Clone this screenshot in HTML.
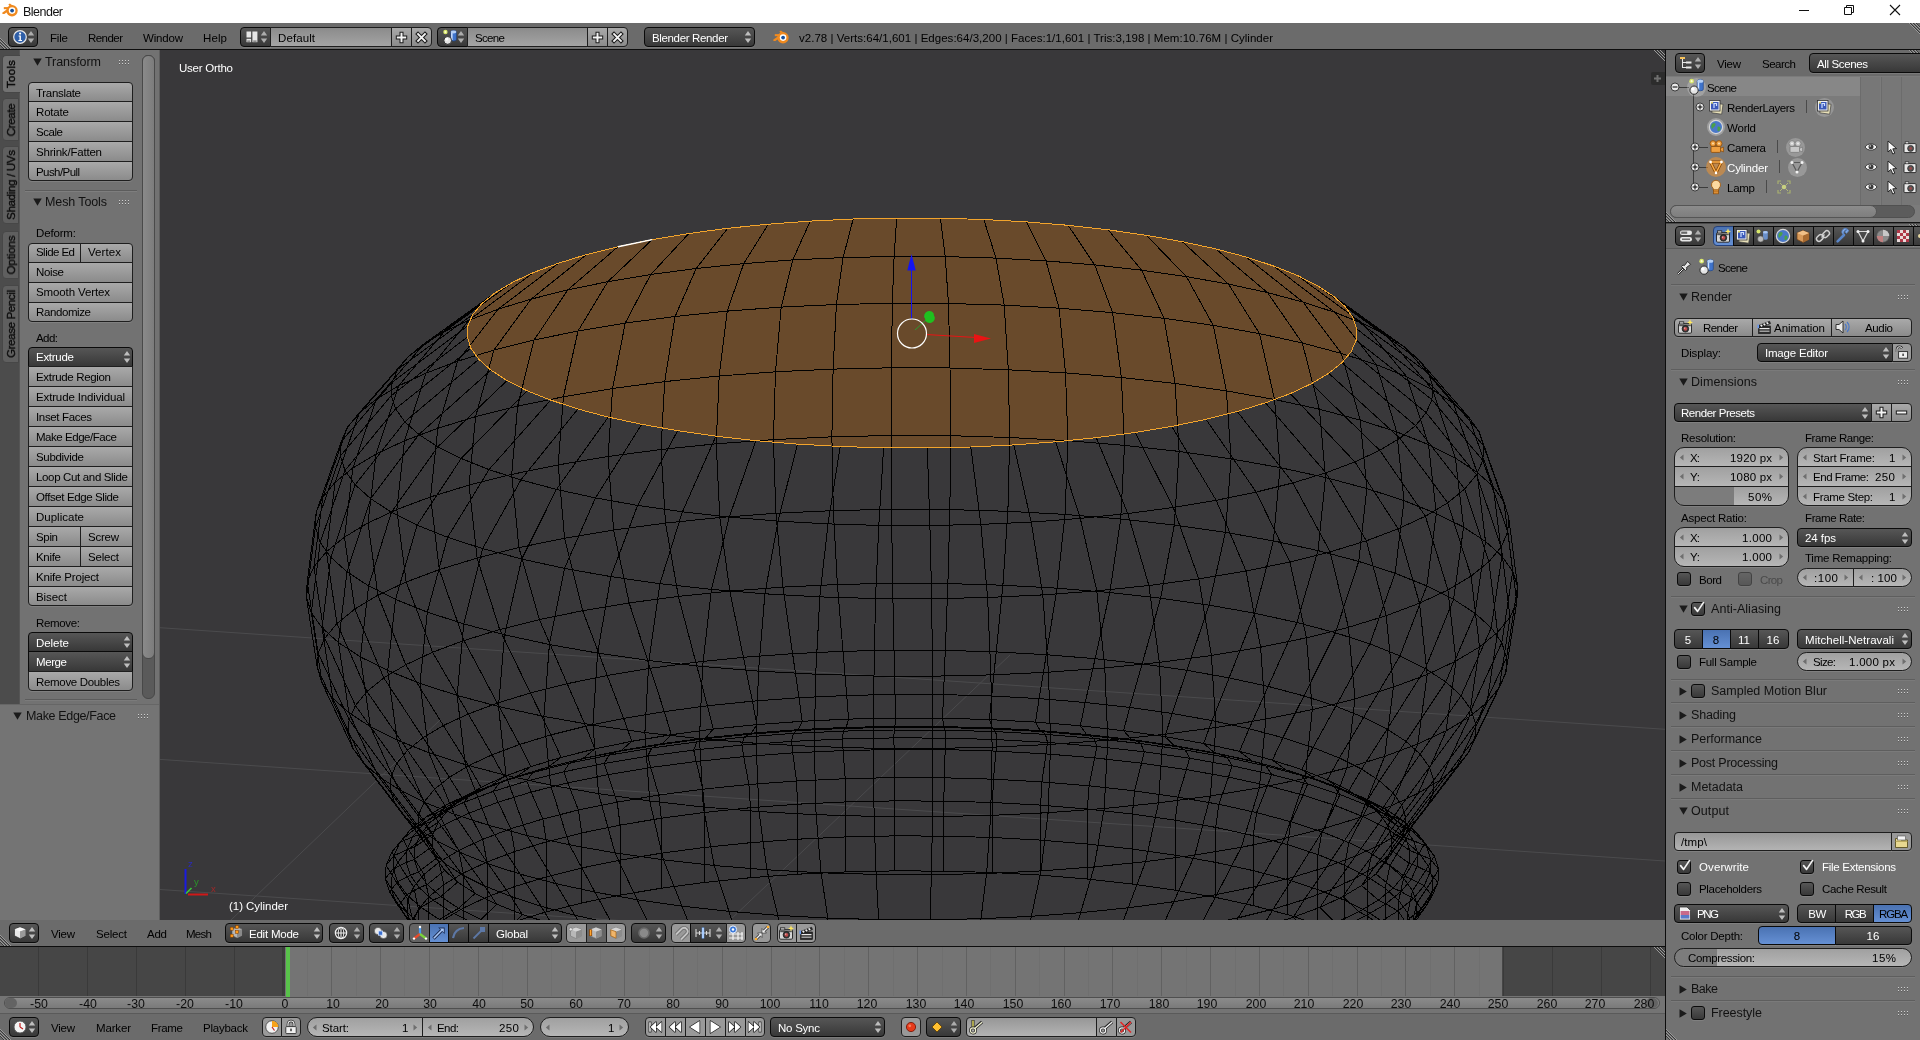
<!DOCTYPE html><html><head><meta charset="utf-8"><title>Blender</title><style>
html,body{margin:0;padding:0;background:#727272;}
body{width:1920px;height:1040px;position:relative;overflow:hidden;font-family:"Liberation Sans", sans-serif;font-size:11.5px;}
div,span,svg{position:absolute;box-sizing:border-box;}
.t{white-space:pre;line-height:16px;height:16px;will-change:transform;}

.w{border:1px solid #1e1e1e;box-shadow:0 1px 0 rgba(255,255,255,0.10);}
.tool{background:linear-gradient(#a9a9a9,#8b8b8b);}
.reg{background:#999;}
.menu{background:linear-gradient(#565656,#383838);border-color:#0a0a0a;}
.num{background:linear-gradient(#a0a0a0,#b6b6b6);}
.txt{background:linear-gradient(#979797,#b3b3b3);}
.radio{background:linear-gradient(#565656,#383838);border-color:#0a0a0a;}
.rsel{background:linear-gradient(#4a72b2,#6590d4);border-color:#0a0a0a;}
.opt{background:linear-gradient(#565656,#383838);border-color:#0a0a0a;border-radius:3px;}
.tsel{background:#646464;}
</style></head><body><div style="left:0px;top:0px;width:1920px;height:23px;background:#fff"></div>
<div style="left:0px;top:23px;width:1920px;height:26px;background:#6b6b6b"></div>
<div style="left:0px;top:49px;width:1920px;height:1px;background:#0d0d0d"></div>
<div style="left:160px;top:50px;width:1505px;height:870px;background:#39383a"></div>
<svg style="left:160px;top:50px" width="1505" height="870" viewBox="160 50 1505 870">
<g stroke="#4b4b4d" stroke-width="1" fill="none">
<path d="M160,627.7L1665,729.3 M160,759.4L1665,861.0 M160,889.5L1665,991.1 M231,920L440,720 M730,920L1010,655"/>
</g>
<path d="M896.7,218.1L940.4,218.2L983.8,219.5L1026.5,221.9L1068.1,225.3L1108.1,229.8L1146.4,235.3L1182.3,241.7L1215.7,248.9L1246.1,257.0L1273.3,265.9L1297.0,275.3L1317.0,285.4L1333.1,295.9L1345.2,306.7L1353.1,317.8L1356.7,329.0L1356.1,340.3L1351.2,351.5L1342.0,362.6L1328.7,373.3L1311.4,383.7L1290.3,393.6L1265.5,402.8L1237.3,411.5L1206.0,419.3L1171.8,426.4L1135.1,432.5L1096.3,437.7L1055.7,441.8L1013.8,444.9L970.8,447.0L927.3,447.9L883.6,447.8L840.2,446.5L797.5,444.1L755.9,440.7L715.9,436.2L677.6,430.7L641.7,424.3L608.3,417.1L577.9,409.0L550.7,400.1L527.0,390.7L507.0,380.6L490.9,370.1L478.8,359.3L470.9,348.2L467.3,337.0L467.9,325.7L472.8,314.5L482.0,303.4L495.3,292.7L512.6,282.3L533.7,272.4L558.5,263.2L586.7,254.5L618.0,246.7L652.2,239.6L688.9,233.5L727.7,228.3L768.3,224.2L810.2,221.1L853.2,219.0Z" fill="#694a2b" stroke="none"/>
<path d="M894.1,256.5L945.2,256.6L996.0,258.1L1046.0,260.9L1094.7,264.9L1141.6,270.2L1186.4,276.6L1228.5,284.1L1267.5,292.6L1303.1,302.1L1335.0,312.4L1362.8,323.5L1386.2,335.2L1405.1,347.5L1419.2,360.2L1428.4,373.2L1432.7,386.4L1431.9,399.6L1426.2,412.7L1415.5,425.6L1399.9,438.2L1379.7,450.3L1354.9,461.9L1325.9,472.8L1292.9,482.9L1256.2,492.1L1216.2,500.3L1173.3,507.5L1127.8,513.5L1080.3,518.4L1031.2,522.1L980.9,524.4L929.9,525.5L878.8,525.4L828.0,523.9L778.0,521.1L729.3,517.1L682.4,511.8L637.6,505.4L595.5,497.9L556.5,489.4L520.9,479.9L489.0,469.6L461.2,458.5L437.8,446.8L418.9,434.5L404.8,421.8L395.6,408.8L391.3,395.6L392.1,382.4L397.8,369.3L408.5,356.4L424.1,343.8L444.3,331.7L469.1,320.1L498.1,309.2L531.1,299.1L567.8,289.9L607.8,281.7L650.7,274.5L696.2,268.5L743.7,263.6L792.8,259.9L843.1,257.6ZM892.3,303.3L948.5,303.5L1004.2,305.1L1059.1,308.2L1112.6,312.6L1164.1,318.3L1213.2,325.4L1259.5,333.6L1302.3,343.0L1341.4,353.4L1376.4,364.7L1406.9,376.9L1432.6,389.8L1453.3,403.3L1468.8,417.2L1479.0,431.5L1483.7,445.9L1482.8,460.4L1476.5,474.8L1464.8,489.0L1447.7,502.8L1425.4,516.2L1398.2,528.8L1366.4,540.8L1330.1,551.9L1289.9,562.0L1246.0,571.0L1198.8,578.9L1148.9,585.5L1096.8,590.9L1042.8,594.9L987.6,597.5L931.7,598.7L875.5,598.5L819.8,596.9L764.9,593.8L711.4,589.4L659.9,583.7L610.8,576.6L564.5,568.4L521.7,559.0L482.6,548.6L447.6,537.3L417.1,525.1L391.4,512.2L370.7,498.7L355.2,484.8L345.0,470.5L340.3,456.1L341.2,441.6L347.5,427.2L359.2,413.0L376.3,399.2L398.6,385.8L425.8,373.2L457.6,361.2L493.9,350.1L534.1,340.0L578.0,331.0L625.2,323.1L675.1,316.5L727.2,311.1L781.2,307.1L836.4,304.5ZM891.5,367.8L950.0,368.0L1008.3,369.8L1065.5,372.9L1121.4,377.5L1175.1,383.5L1226.4,390.9L1274.6,399.5L1319.4,409.2L1360.2,420.1L1396.7,431.9L1428.5,444.6L1455.4,458.1L1477.0,472.2L1493.2,486.7L1503.8,501.6L1508.6,516.7L1507.8,531.8L1501.2,546.9L1488.9,561.7L1471.1,576.1L1447.9,590.0L1419.5,603.2L1386.2,615.7L1348.4,627.3L1306.4,637.8L1260.6,647.2L1211.4,655.5L1159.3,662.4L1104.8,668.0L1048.5,672.2L990.9,674.9L932.5,676.2L874.0,676.0L815.7,674.2L758.5,671.1L702.6,666.5L648.9,660.5L597.6,653.1L549.4,644.5L504.6,634.8L463.8,623.9L427.3,612.1L395.5,599.4L368.6,585.9L347.0,571.8L330.8,557.3L320.2,542.4L315.4,527.3L316.2,512.2L322.8,497.1L335.1,482.3L352.9,467.9L376.1,454.0L404.5,440.8L437.8,428.3L475.6,416.7L517.6,406.2L563.4,396.8L612.6,388.5L664.7,381.6L719.2,376.0L775.5,371.8L833.1,369.1ZM891.2,435.5L950.6,435.7L1009.7,437.5L1067.9,440.7L1124.5,445.4L1179.1,451.4L1231.1,458.9L1280.1,467.6L1325.5,477.5L1366.9,488.6L1404.0,500.6L1436.3,513.5L1463.6,527.1L1485.5,541.4L1501.9,556.2L1512.7,571.3L1517.6,586.6L1516.8,602.0L1510.1,617.2L1497.6,632.3L1479.5,646.9L1456.0,661.0L1427.2,674.5L1393.4,687.1L1355.0,698.9L1312.3,709.6L1265.8,719.1L1215.9,727.5L1163.0,734.5L1107.8,740.2L1050.6,744.4L992.1,747.2L932.8,748.5L873.4,748.3L814.3,746.5L756.1,743.3L699.5,738.6L644.9,732.6L592.9,725.1L543.9,716.4L498.5,706.5L457.1,695.4L420.0,683.4L387.7,670.5L360.4,656.9L338.5,642.6L322.1,627.8L311.3,612.7L306.4,597.4L307.2,582.0L313.9,566.8L326.4,551.7L344.5,537.1L368.0,523.0L396.8,509.5L430.6,496.9L469.0,485.1L511.7,474.4L558.2,464.9L608.1,456.5L661.0,449.5L716.2,443.8L773.4,439.6L831.9,436.8ZM891.5,509.3L949.9,509.6L1007.9,511.3L1065.0,514.4L1120.7,519.0L1174.3,525.0L1225.4,532.3L1273.4,540.9L1318.0,550.6L1358.7,561.4L1395.1,573.2L1426.8,585.9L1453.6,599.3L1475.1,613.3L1491.2,627.8L1501.8,642.7L1506.6,657.7L1505.8,672.8L1499.2,687.8L1487.0,702.5L1469.2,716.9L1446.1,730.8L1417.8,744.0L1384.7,756.4L1346.9,767.9L1305.1,778.4L1259.4,787.8L1210.4,796.0L1158.5,802.9L1104.2,808.5L1048.1,812.7L990.7,815.4L932.5,816.7L874.1,816.4L816.1,814.7L759.0,811.6L703.3,807.0L649.7,801.0L598.6,793.7L550.6,785.1L506.0,775.4L465.3,764.6L428.9,752.8L397.2,740.1L370.4,726.7L348.9,712.7L332.8,698.2L322.2,683.3L317.4,668.3L318.2,653.2L324.8,638.2L337.0,623.5L354.8,609.1L377.9,595.2L406.2,582.0L439.3,569.6L477.1,558.1L518.9,547.6L564.6,538.2L613.6,530.0L665.5,523.1L719.8,517.5L775.9,513.3L833.3,510.6ZM892.6,583.3L947.9,583.6L1002.9,585.2L1057.1,588.2L1109.8,592.5L1160.6,598.2L1209.0,605.1L1254.6,613.2L1296.9,622.5L1335.4,632.7L1369.9,643.9L1400.0,655.9L1425.3,668.6L1445.8,681.9L1461.1,695.7L1471.1,709.7L1475.7,724.0L1474.9,738.3L1468.6,752.5L1457.0,766.5L1440.2,780.1L1418.3,793.2L1391.4,805.8L1360.0,817.5L1324.3,828.4L1284.6,838.4L1241.3,847.3L1194.8,855.1L1145.6,861.6L1094.2,866.9L1041.0,870.9L986.6,873.5L931.4,874.7L876.1,874.4L821.1,872.8L766.9,869.8L714.2,865.5L663.4,859.8L615.0,852.9L569.4,844.8L527.1,835.5L488.6,825.3L454.1,814.1L424.0,802.1L398.7,789.4L378.2,776.1L362.9,762.3L352.9,748.3L348.3,734.0L349.1,719.7L355.4,705.5L367.0,691.5L383.8,677.9L405.7,664.8L432.6,652.2L464.0,640.5L499.7,629.6L539.4,619.6L582.7,610.7L629.2,602.9L678.4,596.4L729.8,591.1L783.0,587.1L837.4,584.5ZM894.0,650.2L945.3,650.4L996.2,651.9L1046.3,654.7L1095.1,658.7L1142.1,663.9L1186.9,670.3L1229.1,677.9L1268.2,686.4L1303.9,695.9L1335.8,706.2L1363.6,717.4L1387.1,729.1L1406.0,741.4L1420.2,754.2L1429.4,767.2L1433.7,780.4L1432.9,793.6L1427.2,806.7L1416.4,819.7L1400.9,832.3L1380.6,844.5L1355.7,856.0L1326.7,866.9L1293.6,877.0L1256.8,886.3L1216.8,894.5L1173.8,901.7L1128.2,907.8L1080.6,912.7L1031.4,916.3L981.0,918.7L930.0,919.8L878.7,919.6L827.8,918.1L777.7,915.3L728.9,911.3L681.9,906.1L637.1,899.7L594.9,892.1L555.8,883.6L520.1,874.1L488.2,863.8L460.4,852.6L436.9,840.9L418.0,828.6L403.8,815.8L394.6,802.8L390.3,789.6L391.1,776.4L396.8,763.3L407.6,750.3L423.1,737.7L443.4,725.5L468.3,714.0L497.3,703.1L530.4,693.0L567.2,683.7L607.2,675.5L650.2,668.3L695.8,662.2L743.4,657.3L792.6,653.7L843.0,651.3ZM895.0,694.4L943.5,694.6L991.7,696.0L1039.1,698.6L1085.2,702.5L1129.7,707.4L1172.2,713.5L1212.1,720.6L1249.1,728.7L1282.9,737.7L1313.1,747.5L1339.4,758.0L1361.6,769.1L1379.5,780.8L1392.9,792.8L1401.7,805.1L1405.7,817.6L1405.0,830.1L1399.5,842.6L1389.4,854.8L1374.6,866.8L1355.4,878.3L1331.9,889.2L1304.4,899.5L1273.1,909.1L1238.3,917.8L1200.4,925.6L1159.7,932.4L1116.6,938.2L1071.6,942.8L1025.0,946.3L977.3,948.5L929.0,949.6L880.5,949.4L832.3,948.0L784.9,945.4L738.8,941.5L694.3,936.6L651.8,930.5L611.9,923.4L574.9,915.3L541.1,906.3L510.9,896.5L484.6,886.0L462.4,874.9L444.5,863.2L431.1,851.2L422.3,838.9L418.3,826.4L419.0,813.9L424.5,801.4L434.6,789.2L449.4,777.2L468.6,765.7L492.1,754.8L519.6,744.5L550.9,734.9L585.7,726.2L623.6,718.4L664.3,711.6L707.4,705.8L752.4,701.2L799.0,697.7L846.7,695.5ZM895.5,718.0L942.6,718.2L989.4,719.6L1035.5,722.1L1080.3,725.8L1123.6,730.7L1164.8,736.6L1203.6,743.5L1239.5,751.3L1272.4,760.1L1301.7,769.6L1327.3,779.8L1348.9,790.6L1366.3,801.9L1379.3,813.6L1387.8,825.6L1391.7,837.7L1391.0,849.9L1385.7,862.0L1375.9,873.9L1361.5,885.5L1342.9,896.7L1320.0,907.3L1293.3,917.3L1262.9,926.6L1229.1,935.1L1192.2,942.7L1152.7,949.3L1110.8,954.9L1067.1,959.4L1021.8,962.7L975.4,964.9L928.5,966.0L881.4,965.8L834.6,964.4L788.5,961.9L743.7,958.2L700.4,953.3L659.2,947.4L620.4,940.5L584.5,932.7L551.6,923.9L522.3,914.4L496.7,904.2L475.1,893.4L457.7,882.1L444.7,870.4L436.2,858.4L432.3,846.3L433.0,834.1L438.3,822.0L448.1,810.1L462.5,798.5L481.1,787.3L504.0,776.7L530.7,766.7L561.1,757.4L594.9,748.9L631.8,741.3L671.3,734.7L713.2,729.1L756.9,724.6L802.2,721.3L848.6,719.1ZM894.9,726.4L943.7,726.6L992.3,728.0L1040.1,730.6L1086.6,734.5L1131.5,739.5L1174.3,745.6L1214.5,752.8L1251.8,760.9L1285.9,770.0L1316.3,779.9L1342.9,790.5L1365.3,801.7L1383.3,813.4L1396.8,825.6L1405.6,838.0L1409.7,850.6L1409.0,863.2L1403.5,875.7L1393.2,888.1L1378.4,900.1L1359.0,911.7L1335.3,922.8L1307.6,933.2L1276.0,942.8L1241.0,951.6L1202.8,959.5L1161.7,966.3L1118.3,972.1L1072.9,976.8L1025.9,980.3L977.8,982.6L929.1,983.6L880.3,983.4L831.7,982.0L783.9,979.4L737.4,975.5L692.5,970.5L649.7,964.4L609.5,957.2L572.2,949.1L538.1,940.0L507.7,930.1L481.1,919.5L458.7,908.3L440.7,896.6L427.2,884.4L418.4,872.0L414.3,859.4L415.0,846.8L420.5,834.3L430.8,821.9L445.6,809.9L465.0,798.3L488.7,787.2L516.4,776.8L548.0,767.2L583.0,758.4L621.2,750.5L662.3,743.7L705.7,737.9L751.1,733.2L798.1,729.7L846.2,727.4ZM894.6,727.3L944.2,727.5L993.6,729.0L1042.1,731.6L1089.4,735.6L1135.0,740.6L1178.5,746.9L1219.4,754.1L1257.3,762.4L1291.9,771.6L1322.8,781.7L1349.8,792.4L1372.5,803.8L1390.9,815.8L1404.6,828.1L1413.6,840.7L1417.7,853.5L1417.0,866.3L1411.4,879.1L1401.0,891.6L1385.9,903.9L1366.2,915.6L1342.1,926.9L1314.0,937.4L1281.9,947.2L1246.3,956.2L1207.4,964.2L1165.7,971.1L1121.6,977.0L1075.5,981.7L1027.7,985.3L978.9,987.6L929.4,988.7L879.8,988.5L830.4,987.0L781.9,984.4L734.6,980.4L689.0,975.4L645.5,969.1L604.6,961.9L566.7,953.6L532.1,944.4L501.2,934.3L474.2,923.6L451.5,912.2L433.1,900.2L419.4,887.9L410.4,875.3L406.3,862.5L407.0,849.7L412.6,836.9L423.0,824.4L438.1,812.1L457.8,800.4L481.9,789.1L510.0,778.6L542.1,768.8L577.7,759.8L616.6,751.8L658.3,744.9L702.4,739.0L748.5,734.3L796.3,730.7L845.1,728.4ZM894.1,730.0L945.1,730.2L995.7,731.6L1045.5,734.4L1094.0,738.4L1140.8,743.6L1185.3,750.0L1227.3,757.5L1266.1,766.0L1301.6,775.4L1333.4,785.7L1361.0,796.8L1384.4,808.4L1403.2,820.7L1417.2,833.3L1426.4,846.3L1430.7,859.4L1429.9,872.5L1424.2,885.6L1413.5,898.5L1398.0,911.0L1377.9,923.1L1353.2,934.6L1324.3,945.5L1291.4,955.5L1254.9,964.7L1215.0,972.9L1172.3,980.0L1127.0,986.1L1079.7,990.9L1030.7,994.6L980.6,996.9L929.9,998.0L878.9,997.8L828.3,996.4L778.5,993.6L730.0,989.6L683.2,984.4L638.7,978.0L596.7,970.5L557.9,962.0L522.4,952.6L490.6,942.3L463.0,931.2L439.6,919.6L420.8,907.3L406.8,894.7L397.6,881.7L393.3,868.6L394.1,855.5L399.8,842.4L410.5,829.5L426.0,817.0L446.1,804.9L470.8,793.4L499.7,782.5L532.6,772.5L569.1,763.3L609.0,755.1L651.7,748.0L697.0,741.9L744.3,737.1L793.3,733.4L843.4,731.1ZM893.9,737.9L945.6,738.1L997.0,739.6L1047.5,742.4L1096.8,746.5L1144.3,751.8L1189.5,758.2L1232.1,765.8L1271.6,774.5L1307.6,784.0L1339.9,794.5L1368.0,805.7L1391.7,817.6L1410.7,830.0L1425.0,842.9L1434.4,856.0L1438.7,869.3L1437.9,882.7L1432.1,896.0L1421.3,909.0L1405.5,921.8L1385.0,934.0L1360.0,945.7L1330.6,956.7L1297.2,966.9L1260.1,976.2L1219.7,984.6L1176.3,991.8L1130.3,997.9L1082.2,1002.9L1032.5,1006.6L981.7,1009.0L930.1,1010.1L878.4,1009.9L827.0,1008.4L776.5,1005.6L727.2,1001.5L679.7,996.2L634.5,989.8L591.9,982.2L552.4,973.5L516.4,964.0L484.1,953.5L456.0,942.3L432.3,930.4L413.3,918.0L399.0,905.1L389.6,892.0L385.3,878.7L386.1,865.3L391.9,852.0L402.7,839.0L418.5,826.2L439.0,814.0L464.0,802.3L493.4,791.3L526.8,781.1L563.9,771.8L604.3,763.4L647.7,756.2L693.7,750.1L741.8,745.1L791.5,741.4L842.3,739.0ZM894.1,749.5L945.2,749.6L996.0,751.1L1046.0,753.9L1094.7,757.9L1141.6,763.2L1186.4,769.6L1228.5,777.1L1267.5,785.6L1303.1,795.1L1335.0,805.4L1362.8,816.5L1386.2,828.2L1405.1,840.5L1419.2,853.2L1428.4,866.2L1432.7,879.4L1431.9,892.6L1426.2,905.7L1415.5,918.6L1399.9,931.2L1379.7,943.3L1354.9,954.9L1325.9,965.8L1292.9,975.9L1256.2,985.1L1216.2,993.3L1173.3,1000.5L1127.8,1006.5L1080.3,1011.4L1031.2,1015.1L980.9,1017.4L929.9,1018.5L878.8,1018.4L828.0,1016.9L778.0,1014.1L729.3,1010.1L682.4,1004.8L637.6,998.4L595.5,990.9L556.5,982.4L520.9,972.9L489.0,962.6L461.2,951.5L437.8,939.8L418.9,927.5L404.8,914.8L395.6,901.8L391.3,888.6L392.1,875.4L397.8,862.3L408.5,849.4L424.1,836.8L444.3,824.7L469.1,813.1L498.1,802.2L531.1,792.1L567.8,782.9L607.8,774.7L650.7,767.5L696.2,761.5L743.7,756.6L792.8,752.9L843.1,750.6ZM894.6,777.6L944.2,777.8L993.4,779.2L1041.9,781.9L1089.1,785.8L1134.6,790.9L1178.0,797.1L1218.8,804.3L1256.6,812.6L1291.1,821.8L1322.0,831.8L1348.9,842.6L1371.6,853.9L1389.9,865.8L1403.6,878.2L1412.6,890.8L1416.7,903.5L1416.0,916.3L1410.4,929.0L1400.0,941.6L1384.9,953.8L1365.3,965.5L1341.3,976.7L1313.2,987.3L1281.2,997.0L1245.6,1006.0L1206.8,1013.9L1165.2,1020.9L1121.2,1026.8L1075.1,1031.5L1027.5,1035.0L978.8,1037.3L929.4,1038.4L879.8,1038.2L830.6,1036.8L782.1,1034.1L734.9,1030.2L689.4,1025.1L646.0,1018.9L605.2,1011.7L567.4,1003.4L532.9,994.2L502.0,984.2L475.1,973.4L452.4,962.1L434.1,950.2L420.4,937.8L411.4,925.2L407.3,912.5L408.0,899.7L413.6,887.0L424.0,874.4L439.1,862.2L458.7,850.5L482.7,839.3L510.8,828.7L542.8,819.0L578.4,810.0L617.2,802.1L658.8,795.1L702.8,789.2L748.9,784.5L796.5,781.0L845.2,778.7ZM894.8,800.9L943.9,801.1L992.6,802.5L1040.6,805.1L1087.3,809.0L1132.4,814.0L1175.3,820.2L1215.7,827.4L1253.2,835.6L1287.4,844.6L1317.9,854.6L1344.6,865.2L1367.1,876.5L1385.2,888.3L1398.7,900.5L1407.6,912.9L1411.7,925.6L1411.0,938.2L1405.5,950.8L1395.2,963.2L1380.2,975.3L1360.8,986.9L1337.0,998.0L1309.2,1008.5L1277.5,1018.2L1242.3,1027.0L1203.9,1034.9L1162.7,1041.8L1119.1,1047.6L1073.5,1052.3L1026.4,1055.8L978.1,1058.1L929.2,1059.1L880.1,1058.9L831.4,1057.5L783.4,1054.9L736.7,1051.0L691.6,1046.0L648.7,1039.8L608.3,1032.6L570.8,1024.4L536.6,1015.4L506.1,1005.4L479.4,994.8L456.9,983.5L438.8,971.7L425.3,959.5L416.4,947.1L412.3,934.4L413.0,921.8L418.5,909.2L428.8,896.8L443.8,884.7L463.2,873.1L487.0,862.0L514.8,851.5L546.5,841.8L581.7,833.0L620.1,825.1L661.3,818.2L704.9,812.4L750.5,807.7L797.6,804.2L845.9,801.9ZM894.8,835.9L943.9,836.1L992.6,837.5L1040.6,840.1L1087.3,844.0L1132.4,849.0L1175.3,855.2L1215.7,862.4L1253.2,870.6L1287.4,879.6L1317.9,889.6L1344.6,900.2L1367.1,911.5L1385.2,923.3L1398.7,935.5L1407.6,947.9L1411.7,960.6L1411.0,973.2L1405.5,985.8L1395.2,998.2L1380.2,1010.3L1360.8,1021.9L1337.0,1033.0L1309.2,1043.5L1277.5,1053.2L1242.3,1062.0L1203.9,1069.9L1162.7,1076.8L1119.1,1082.6L1073.5,1087.3L1026.4,1090.8L978.1,1093.1L929.2,1094.1L880.1,1093.9L831.4,1092.5L783.4,1089.9L736.7,1086.0L691.6,1081.0L648.7,1074.8L608.3,1067.6L570.8,1059.4L536.6,1050.4L506.1,1040.4L479.4,1029.8L456.9,1018.5L438.8,1006.7L425.3,994.5L416.4,982.1L412.3,969.4L413.0,956.8L418.5,944.2L428.8,931.8L443.8,919.7L463.2,908.1L487.0,897.0L514.8,886.5L546.5,876.8L581.7,868.0L620.1,860.1L661.3,853.2L704.9,847.4L750.5,842.7L797.6,839.2L845.9,836.9ZM894.8,870.9L943.9,871.1L992.6,872.5L1040.6,875.1L1087.3,879.0L1132.4,884.0L1175.3,890.2L1215.7,897.4L1253.2,905.6L1287.4,914.6L1317.9,924.6L1344.6,935.2L1367.1,946.5L1385.2,958.3L1398.7,970.5L1407.6,982.9L1411.7,995.6L1411.0,1008.2L1405.5,1020.8L1395.2,1033.2L1380.2,1045.3L1360.8,1056.9L1337.0,1068.0L1309.2,1078.5L1277.5,1088.2L1242.3,1097.0L1203.9,1104.9L1162.7,1111.8L1119.1,1117.6L1073.5,1122.3L1026.4,1125.8L978.1,1128.1L929.2,1129.1L880.1,1128.9L831.4,1127.5L783.4,1124.9L736.7,1121.0L691.6,1116.0L648.7,1109.8L608.3,1102.6L570.8,1094.4L536.6,1085.4L506.1,1075.4L479.4,1064.8L456.9,1053.5L438.8,1041.7L425.3,1029.5L416.4,1017.1L412.3,1004.4L413.0,991.8L418.5,979.2L428.8,966.8L443.8,954.7L463.2,943.1L487.0,932.0L514.8,921.5L546.5,911.8L581.7,903.0L620.1,895.1L661.3,888.2L704.9,882.4L750.5,877.7L797.6,874.2L845.9,871.9ZM896.7,218.1L894.1,256.5L892.3,303.3L891.5,367.8L891.2,435.5L891.5,509.3L892.6,583.3L894.0,650.2L895.0,694.4L895.5,718.0L894.9,726.4L894.6,727.3L894.1,730.0L893.9,737.9L894.1,749.5L894.6,777.6L894.8,800.9L894.8,835.9L894.8,870.9M940.4,218.2L945.2,256.6L948.5,303.5L950.0,368.0L950.6,435.7L949.9,509.6L947.9,583.6L945.3,650.4L943.5,694.6L942.6,718.2L943.7,726.6L944.2,727.5L945.1,730.2L945.6,738.1L945.2,749.6L944.2,777.8L943.9,801.1L943.9,836.1L943.9,871.1M983.8,219.5L996.0,258.1L1004.2,305.1L1008.3,369.8L1009.7,437.5L1007.9,511.3L1002.9,585.2L996.2,651.9L991.7,696.0L989.4,719.6L992.3,728.0L993.6,729.0L995.7,731.6L997.0,739.6L996.0,751.1L993.4,779.2L992.6,802.5L992.6,837.5L992.6,872.5M1026.5,221.9L1046.0,260.9L1059.1,308.2L1065.5,372.9L1067.9,440.7L1065.0,514.4L1057.1,588.2L1046.3,654.7L1039.1,698.6L1035.5,722.1L1040.1,730.6L1042.1,731.6L1045.5,734.4L1047.5,742.4L1046.0,753.9L1041.9,781.9L1040.6,805.1L1040.6,840.1L1040.6,875.1M1068.1,225.3L1094.7,264.9L1112.6,312.6L1121.4,377.5L1124.5,445.4L1120.7,519.0L1109.8,592.5L1095.1,658.7L1085.2,702.5L1080.3,725.8L1086.6,734.5L1089.4,735.6L1094.0,738.4L1096.8,746.5L1094.7,757.9L1089.1,785.8L1087.3,809.0L1087.3,844.0L1087.3,879.0M1108.1,229.8L1141.6,270.2L1164.1,318.3L1175.1,383.5L1179.1,451.4L1174.3,525.0L1160.6,598.2L1142.1,663.9L1129.7,707.4L1123.6,730.7L1131.5,739.5L1135.0,740.6L1140.8,743.6L1144.3,751.8L1141.6,763.2L1134.6,790.9L1132.4,814.0L1132.4,849.0L1132.4,884.0M1146.4,235.3L1186.4,276.6L1213.2,325.4L1226.4,390.9L1231.1,458.9L1225.4,532.3L1209.0,605.1L1186.9,670.3L1172.2,713.5L1164.8,736.6L1174.3,745.6L1178.5,746.9L1185.3,750.0L1189.5,758.2L1186.4,769.6L1178.0,797.1L1175.3,820.2L1175.3,855.2L1175.3,890.2M1182.3,241.7L1228.5,284.1L1259.5,333.6L1274.6,399.5L1280.1,467.6L1273.4,540.9L1254.6,613.2L1229.1,677.9L1212.1,720.6L1203.6,743.5L1214.5,752.8L1219.4,754.1L1227.3,757.5L1232.1,765.8L1228.5,777.1L1218.8,804.3L1215.7,827.4L1215.7,862.4L1215.7,897.4M1215.7,248.9L1267.5,292.6L1302.3,343.0L1319.4,409.2L1325.5,477.5L1318.0,550.6L1296.9,622.5L1268.2,686.4L1249.1,728.7L1239.5,751.3L1251.8,760.9L1257.3,762.4L1266.1,766.0L1271.6,774.5L1267.5,785.6L1256.6,812.6L1253.2,835.6L1253.2,870.6L1253.2,905.6M1246.1,257.0L1303.1,302.1L1341.4,353.4L1360.2,420.1L1366.9,488.6L1358.7,561.4L1335.4,632.7L1303.9,695.9L1282.9,737.7L1272.4,760.1L1285.9,770.0L1291.9,771.6L1301.6,775.4L1307.6,784.0L1303.1,795.1L1291.1,821.8L1287.4,844.6L1287.4,879.6L1287.4,914.6M1273.3,265.9L1335.0,312.4L1376.4,364.7L1396.7,431.9L1404.0,500.6L1395.1,573.2L1369.9,643.9L1335.8,706.2L1313.1,747.5L1301.7,769.6L1316.3,779.9L1322.8,781.7L1333.4,785.7L1339.9,794.5L1335.0,805.4L1322.0,831.8L1317.9,854.6L1317.9,889.6L1317.9,924.6M1297.0,275.3L1362.8,323.5L1406.9,376.9L1428.5,444.6L1436.3,513.5L1426.8,585.9L1400.0,655.9L1363.6,717.4L1339.4,758.0L1327.3,779.8L1342.9,790.5L1349.8,792.4L1361.0,796.8L1368.0,805.7L1362.8,816.5L1348.9,842.6L1344.6,865.2L1344.6,900.2L1344.6,935.2M1317.0,285.4L1386.2,335.2L1432.6,389.8L1455.4,458.1L1463.6,527.1L1453.6,599.3L1425.3,668.6L1387.1,729.1L1361.6,769.1L1348.9,790.6L1365.3,801.7L1372.5,803.8L1384.4,808.4L1391.7,817.6L1386.2,828.2L1371.6,853.9L1367.1,876.5L1367.1,911.5L1367.1,946.5M1333.1,295.9L1405.1,347.5L1453.3,403.3L1477.0,472.2L1485.5,541.4L1475.1,613.3L1445.8,681.9L1406.0,741.4L1379.5,780.8L1366.3,801.9L1383.3,813.4L1390.9,815.8L1403.2,820.7L1410.7,830.0L1405.1,840.5L1389.9,865.8L1385.2,888.3L1385.2,923.3L1385.2,958.3M1345.2,306.7L1419.2,360.2L1468.8,417.2L1493.2,486.7L1501.9,556.2L1491.2,627.8L1461.1,695.7L1420.2,754.2L1392.9,792.8L1379.3,813.6L1396.8,825.6L1404.6,828.1L1417.2,833.3L1425.0,842.9L1419.2,853.2L1403.6,878.2L1398.7,900.5L1398.7,935.5L1398.7,970.5M1353.1,317.8L1428.4,373.2L1479.0,431.5L1503.8,501.6L1512.7,571.3L1501.8,642.7L1471.1,709.7L1429.4,767.2L1401.7,805.1L1387.8,825.6L1405.6,838.0L1413.6,840.7L1426.4,846.3L1434.4,856.0L1428.4,866.2L1412.6,890.8L1407.6,912.9L1407.6,947.9L1407.6,982.9M1356.7,329.0L1432.7,386.4L1483.7,445.9L1508.6,516.7L1517.6,586.6L1506.6,657.7L1475.7,724.0L1433.7,780.4L1405.7,817.6L1391.7,837.7L1409.7,850.6L1417.7,853.5L1430.7,859.4L1438.7,869.3L1432.7,879.4L1416.7,903.5L1411.7,925.6L1411.7,960.6L1411.7,995.6M1356.1,340.3L1431.9,399.6L1482.8,460.4L1507.8,531.8L1516.8,602.0L1505.8,672.8L1474.9,738.3L1432.9,793.6L1405.0,830.1L1391.0,849.9L1409.0,863.2L1417.0,866.3L1429.9,872.5L1437.9,882.7L1431.9,892.6L1416.0,916.3L1411.0,938.2L1411.0,973.2L1411.0,1008.2M1351.2,351.5L1426.2,412.7L1476.5,474.8L1501.2,546.9L1510.1,617.2L1499.2,687.8L1468.6,752.5L1427.2,806.7L1399.5,842.6L1385.7,862.0L1403.5,875.7L1411.4,879.1L1424.2,885.6L1432.1,896.0L1426.2,905.7L1410.4,929.0L1405.5,950.8L1405.5,985.8L1405.5,1020.8M1342.0,362.6L1415.5,425.6L1464.8,489.0L1488.9,561.7L1497.6,632.3L1487.0,702.5L1457.0,766.5L1416.4,819.7L1389.4,854.8L1375.9,873.9L1393.2,888.1L1401.0,891.6L1413.5,898.5L1421.3,909.0L1415.5,918.6L1400.0,941.6L1395.2,963.2L1395.2,998.2L1395.2,1033.2M1328.7,373.3L1399.9,438.2L1447.7,502.8L1471.1,576.1L1479.5,646.9L1469.2,716.9L1440.2,780.1L1400.9,832.3L1374.6,866.8L1361.5,885.5L1378.4,900.1L1385.9,903.9L1398.0,911.0L1405.5,921.8L1399.9,931.2L1384.9,953.8L1380.2,975.3L1380.2,1010.3L1380.2,1045.3M1311.4,383.7L1379.7,450.3L1425.4,516.2L1447.9,590.0L1456.0,661.0L1446.1,730.8L1418.3,793.2L1380.6,844.5L1355.4,878.3L1342.9,896.7L1359.0,911.7L1366.2,915.6L1377.9,923.1L1385.0,934.0L1379.7,943.3L1365.3,965.5L1360.8,986.9L1360.8,1021.9L1360.8,1056.9M1290.3,393.6L1354.9,461.9L1398.2,528.8L1419.5,603.2L1427.2,674.5L1417.8,744.0L1391.4,805.8L1355.7,856.0L1331.9,889.2L1320.0,907.3L1335.3,922.8L1342.1,926.9L1353.2,934.6L1360.0,945.7L1354.9,954.9L1341.3,976.7L1337.0,998.0L1337.0,1033.0L1337.0,1068.0M1265.5,402.8L1325.9,472.8L1366.4,540.8L1386.2,615.7L1393.4,687.1L1384.7,756.4L1360.0,817.5L1326.7,866.9L1304.4,899.5L1293.3,917.3L1307.6,933.2L1314.0,937.4L1324.3,945.5L1330.6,956.7L1325.9,965.8L1313.2,987.3L1309.2,1008.5L1309.2,1043.5L1309.2,1078.5M1237.3,411.5L1292.9,482.9L1330.1,551.9L1348.4,627.3L1355.0,698.9L1346.9,767.9L1324.3,828.4L1293.6,877.0L1273.1,909.1L1262.9,926.6L1276.0,942.8L1281.9,947.2L1291.4,955.5L1297.2,966.9L1292.9,975.9L1281.2,997.0L1277.5,1018.2L1277.5,1053.2L1277.5,1088.2M1206.0,419.3L1256.2,492.1L1289.9,562.0L1306.4,637.8L1312.3,709.6L1305.1,778.4L1284.6,838.4L1256.8,886.3L1238.3,917.8L1229.1,935.1L1241.0,951.6L1246.3,956.2L1254.9,964.7L1260.1,976.2L1256.2,985.1L1245.6,1006.0L1242.3,1027.0L1242.3,1062.0L1242.3,1097.0M1171.8,426.4L1216.2,500.3L1246.0,571.0L1260.6,647.2L1265.8,719.1L1259.4,787.8L1241.3,847.3L1216.8,894.5L1200.4,925.6L1192.2,942.7L1202.8,959.5L1207.4,964.2L1215.0,972.9L1219.7,984.6L1216.2,993.3L1206.8,1013.9L1203.9,1034.9L1203.9,1069.9L1203.9,1104.9M1135.1,432.5L1173.3,507.5L1198.8,578.9L1211.4,655.5L1215.9,727.5L1210.4,796.0L1194.8,855.1L1173.8,901.7L1159.7,932.4L1152.7,949.3L1161.7,966.3L1165.7,971.1L1172.3,980.0L1176.3,991.8L1173.3,1000.5L1165.2,1020.9L1162.7,1041.8L1162.7,1076.8L1162.7,1111.8M1096.3,437.7L1127.8,513.5L1148.9,585.5L1159.3,662.4L1163.0,734.5L1158.5,802.9L1145.6,861.6L1128.2,907.8L1116.6,938.2L1110.8,954.9L1118.3,972.1L1121.6,977.0L1127.0,986.1L1130.3,997.9L1127.8,1006.5L1121.2,1026.8L1119.1,1047.6L1119.1,1082.6L1119.1,1117.6M1055.7,441.8L1080.3,518.4L1096.8,590.9L1104.8,668.0L1107.8,740.2L1104.2,808.5L1094.2,866.9L1080.6,912.7L1071.6,942.8L1067.1,959.4L1072.9,976.8L1075.5,981.7L1079.7,990.9L1082.2,1002.9L1080.3,1011.4L1075.1,1031.5L1073.5,1052.3L1073.5,1087.3L1073.5,1122.3M1013.8,444.9L1031.2,522.1L1042.8,594.9L1048.5,672.2L1050.6,744.4L1048.1,812.7L1041.0,870.9L1031.4,916.3L1025.0,946.3L1021.8,962.7L1025.9,980.3L1027.7,985.3L1030.7,994.6L1032.5,1006.6L1031.2,1015.1L1027.5,1035.0L1026.4,1055.8L1026.4,1090.8L1026.4,1125.8M970.8,447.0L980.9,524.4L987.6,597.5L990.9,674.9L992.1,747.2L990.7,815.4L986.6,873.5L981.0,918.7L977.3,948.5L975.4,964.9L977.8,982.6L978.9,987.6L980.6,996.9L981.7,1009.0L980.9,1017.4L978.8,1037.3L978.1,1058.1L978.1,1093.1L978.1,1128.1M927.3,447.9L929.9,525.5L931.7,598.7L932.5,676.2L932.8,748.5L932.5,816.7L931.4,874.7L930.0,919.8L929.0,949.6L928.5,966.0L929.1,983.6L929.4,988.7L929.9,998.0L930.1,1010.1L929.9,1018.5L929.4,1038.4L929.2,1059.1L929.2,1094.1L929.2,1129.1M883.6,447.8L878.8,525.4L875.5,598.5L874.0,676.0L873.4,748.3L874.1,816.4L876.1,874.4L878.7,919.6L880.5,949.4L881.4,965.8L880.3,983.4L879.8,988.5L878.9,997.8L878.4,1009.9L878.8,1018.4L879.8,1038.2L880.1,1058.9L880.1,1093.9L880.1,1128.9M840.2,446.5L828.0,523.9L819.8,596.9L815.7,674.2L814.3,746.5L816.1,814.7L821.1,872.8L827.8,918.1L832.3,948.0L834.6,964.4L831.7,982.0L830.4,987.0L828.3,996.4L827.0,1008.4L828.0,1016.9L830.6,1036.8L831.4,1057.5L831.4,1092.5L831.4,1127.5M797.5,444.1L778.0,521.1L764.9,593.8L758.5,671.1L756.1,743.3L759.0,811.6L766.9,869.8L777.7,915.3L784.9,945.4L788.5,961.9L783.9,979.4L781.9,984.4L778.5,993.6L776.5,1005.6L778.0,1014.1L782.1,1034.1L783.4,1054.9L783.4,1089.9L783.4,1124.9M755.9,440.7L729.3,517.1L711.4,589.4L702.6,666.5L699.5,738.6L703.3,807.0L714.2,865.5L728.9,911.3L738.8,941.5L743.7,958.2L737.4,975.5L734.6,980.4L730.0,989.6L727.2,1001.5L729.3,1010.1L734.9,1030.2L736.7,1051.0L736.7,1086.0L736.7,1121.0M715.9,436.2L682.4,511.8L659.9,583.7L648.9,660.5L644.9,732.6L649.7,801.0L663.4,859.8L681.9,906.1L694.3,936.6L700.4,953.3L692.5,970.5L689.0,975.4L683.2,984.4L679.7,996.2L682.4,1004.8L689.4,1025.1L691.6,1046.0L691.6,1081.0L691.6,1116.0M677.6,430.7L637.6,505.4L610.8,576.6L597.6,653.1L592.9,725.1L598.6,793.7L615.0,852.9L637.1,899.7L651.8,930.5L659.2,947.4L649.7,964.4L645.5,969.1L638.7,978.0L634.5,989.8L637.6,998.4L646.0,1018.9L648.7,1039.8L648.7,1074.8L648.7,1109.8M641.7,424.3L595.5,497.9L564.5,568.4L549.4,644.5L543.9,716.4L550.6,785.1L569.4,844.8L594.9,892.1L611.9,923.4L620.4,940.5L609.5,957.2L604.6,961.9L596.7,970.5L591.9,982.2L595.5,990.9L605.2,1011.7L608.3,1032.6L608.3,1067.6L608.3,1102.6M608.3,417.1L556.5,489.4L521.7,559.0L504.6,634.8L498.5,706.5L506.0,775.4L527.1,835.5L555.8,883.6L574.9,915.3L584.5,932.7L572.2,949.1L566.7,953.6L557.9,962.0L552.4,973.5L556.5,982.4L567.4,1003.4L570.8,1024.4L570.8,1059.4L570.8,1094.4M577.9,409.0L520.9,479.9L482.6,548.6L463.8,623.9L457.1,695.4L465.3,764.6L488.6,825.3L520.1,874.1L541.1,906.3L551.6,923.9L538.1,940.0L532.1,944.4L522.4,952.6L516.4,964.0L520.9,972.9L532.9,994.2L536.6,1015.4L536.6,1050.4L536.6,1085.4M550.7,400.1L489.0,469.6L447.6,537.3L427.3,612.1L420.0,683.4L428.9,752.8L454.1,814.1L488.2,863.8L510.9,896.5L522.3,914.4L507.7,930.1L501.2,934.3L490.6,942.3L484.1,953.5L489.0,962.6L502.0,984.2L506.1,1005.4L506.1,1040.4L506.1,1075.4M527.0,390.7L461.2,458.5L417.1,525.1L395.5,599.4L387.7,670.5L397.2,740.1L424.0,802.1L460.4,852.6L484.6,886.0L496.7,904.2L481.1,919.5L474.2,923.6L463.0,931.2L456.0,942.3L461.2,951.5L475.1,973.4L479.4,994.8L479.4,1029.8L479.4,1064.8M507.0,380.6L437.8,446.8L391.4,512.2L368.6,585.9L360.4,656.9L370.4,726.7L398.7,789.4L436.9,840.9L462.4,874.9L475.1,893.4L458.7,908.3L451.5,912.2L439.6,919.6L432.3,930.4L437.8,939.8L452.4,962.1L456.9,983.5L456.9,1018.5L456.9,1053.5M490.9,370.1L418.9,434.5L370.7,498.7L347.0,571.8L338.5,642.6L348.9,712.7L378.2,776.1L418.0,828.6L444.5,863.2L457.7,882.1L440.7,896.6L433.1,900.2L420.8,907.3L413.3,918.0L418.9,927.5L434.1,950.2L438.8,971.7L438.8,1006.7L438.8,1041.7M478.8,359.3L404.8,421.8L355.2,484.8L330.8,557.3L322.1,627.8L332.8,698.2L362.9,762.3L403.8,815.8L431.1,851.2L444.7,870.4L427.2,884.4L419.4,887.9L406.8,894.7L399.0,905.1L404.8,914.8L420.4,937.8L425.3,959.5L425.3,994.5L425.3,1029.5M470.9,348.2L395.6,408.8L345.0,470.5L320.2,542.4L311.3,612.7L322.2,683.3L352.9,748.3L394.6,802.8L422.3,838.9L436.2,858.4L418.4,872.0L410.4,875.3L397.6,881.7L389.6,892.0L395.6,901.8L411.4,925.2L416.4,947.1L416.4,982.1L416.4,1017.1M467.3,337.0L391.3,395.6L340.3,456.1L315.4,527.3L306.4,597.4L317.4,668.3L348.3,734.0L390.3,789.6L418.3,826.4L432.3,846.3L414.3,859.4L406.3,862.5L393.3,868.6L385.3,878.7L391.3,888.6L407.3,912.5L412.3,934.4L412.3,969.4L412.3,1004.4M467.9,325.7L392.1,382.4L341.2,441.6L316.2,512.2L307.2,582.0L318.2,653.2L349.1,719.7L391.1,776.4L419.0,813.9L433.0,834.1L415.0,846.8L407.0,849.7L394.1,855.5L386.1,865.3L392.1,875.4L408.0,899.7L413.0,921.8L413.0,956.8L413.0,991.8M472.8,314.5L397.8,369.3L347.5,427.2L322.8,497.1L313.9,566.8L324.8,638.2L355.4,705.5L396.8,763.3L424.5,801.4L438.3,822.0L420.5,834.3L412.6,836.9L399.8,842.4L391.9,852.0L397.8,862.3L413.6,887.0L418.5,909.2L418.5,944.2L418.5,979.2M482.0,303.4L408.5,356.4L359.2,413.0L335.1,482.3L326.4,551.7L337.0,623.5L367.0,691.5L407.6,750.3L434.6,789.2L448.1,810.1L430.8,821.9L423.0,824.4L410.5,829.5L402.7,839.0L408.5,849.4L424.0,874.4L428.8,896.8L428.8,931.8L428.8,966.8M495.3,292.7L424.1,343.8L376.3,399.2L352.9,467.9L344.5,537.1L354.8,609.1L383.8,677.9L423.1,737.7L449.4,777.2L462.5,798.5L445.6,809.9L438.1,812.1L426.0,817.0L418.5,826.2L424.1,836.8L439.1,862.2L443.8,884.7L443.8,919.7L443.8,954.7M512.6,282.3L444.3,331.7L398.6,385.8L376.1,454.0L368.0,523.0L377.9,595.2L405.7,664.8L443.4,725.5L468.6,765.7L481.1,787.3L465.0,798.3L457.8,800.4L446.1,804.9L439.0,814.0L444.3,824.7L458.7,850.5L463.2,873.1L463.2,908.1L463.2,943.1M533.7,272.4L469.1,320.1L425.8,373.2L404.5,440.8L396.8,509.5L406.2,582.0L432.6,652.2L468.3,714.0L492.1,754.8L504.0,776.7L488.7,787.2L481.9,789.1L470.8,793.4L464.0,802.3L469.1,813.1L482.7,839.3L487.0,862.0L487.0,897.0L487.0,932.0M558.5,263.2L498.1,309.2L457.6,361.2L437.8,428.3L430.6,496.9L439.3,569.6L464.0,640.5L497.3,703.1L519.6,744.5L530.7,766.7L516.4,776.8L510.0,778.6L499.7,782.5L493.4,791.3L498.1,802.2L510.8,828.7L514.8,851.5L514.8,886.5L514.8,921.5M586.7,254.5L531.1,299.1L493.9,350.1L475.6,416.7L469.0,485.1L477.1,558.1L499.7,629.6L530.4,693.0L550.9,734.9L561.1,757.4L548.0,767.2L542.1,768.8L532.6,772.5L526.8,781.1L531.1,792.1L542.8,819.0L546.5,841.8L546.5,876.8L546.5,911.8M618.0,246.7L567.8,289.9L534.1,340.0L517.6,406.2L511.7,474.4L518.9,547.6L539.4,619.6L567.2,683.7L585.7,726.2L594.9,748.9L583.0,758.4L577.7,759.8L569.1,763.3L563.9,771.8L567.8,782.9L578.4,810.0L581.7,833.0L581.7,868.0L581.7,903.0M652.2,239.6L607.8,281.7L578.0,331.0L563.4,396.8L558.2,464.9L564.6,538.2L582.7,610.7L607.2,675.5L623.6,718.4L631.8,741.3L621.2,750.5L616.6,751.8L609.0,755.1L604.3,763.4L607.8,774.7L617.2,802.1L620.1,825.1L620.1,860.1L620.1,895.1M688.9,233.5L650.7,274.5L625.2,323.1L612.6,388.5L608.1,456.5L613.6,530.0L629.2,602.9L650.2,668.3L664.3,711.6L671.3,734.7L662.3,743.7L658.3,744.9L651.7,748.0L647.7,756.2L650.7,767.5L658.8,795.1L661.3,818.2L661.3,853.2L661.3,888.2M727.7,228.3L696.2,268.5L675.1,316.5L664.7,381.6L661.0,449.5L665.5,523.1L678.4,596.4L695.8,662.2L707.4,705.8L713.2,729.1L705.7,737.9L702.4,739.0L697.0,741.9L693.7,750.1L696.2,761.5L702.8,789.2L704.9,812.4L704.9,847.4L704.9,882.4M768.3,224.2L743.7,263.6L727.2,311.1L719.2,376.0L716.2,443.8L719.8,517.5L729.8,591.1L743.4,657.3L752.4,701.2L756.9,724.6L751.1,733.2L748.5,734.3L744.3,737.1L741.8,745.1L743.7,756.6L748.9,784.5L750.5,807.7L750.5,842.7L750.5,877.7M810.2,221.1L792.8,259.9L781.2,307.1L775.5,371.8L773.4,439.6L775.9,513.3L783.0,587.1L792.6,653.7L799.0,697.7L802.2,721.3L798.1,729.7L796.3,730.7L793.3,733.4L791.5,741.4L792.8,752.9L796.5,781.0L797.6,804.2L797.6,839.2L797.6,874.2M853.2,219.0L843.1,257.6L836.4,304.5L833.1,369.1L831.9,436.8L833.3,510.6L837.4,584.5L843.0,651.3L846.7,695.5L848.6,719.1L846.2,727.4L845.1,728.4L843.4,731.1L842.3,739.0L843.1,750.6L845.2,778.7L845.9,801.9L845.9,836.9L845.9,871.9" fill="none" stroke="#000" stroke-width="1" shape-rendering="crispEdges"/>
<path d="M896.7,218.1L940.4,218.2L983.8,219.5L1026.5,221.9L1068.1,225.3L1108.1,229.8L1146.4,235.3L1182.3,241.7L1215.7,248.9L1246.1,257.0L1273.3,265.9L1297.0,275.3L1317.0,285.4L1333.1,295.9L1345.2,306.7L1353.1,317.8L1356.7,329.0L1356.1,340.3L1351.2,351.5L1342.0,362.6L1328.7,373.3L1311.4,383.7L1290.3,393.6L1265.5,402.8L1237.3,411.5L1206.0,419.3L1171.8,426.4L1135.1,432.5L1096.3,437.7L1055.7,441.8L1013.8,444.9L970.8,447.0L927.3,447.9L883.6,447.8L840.2,446.5L797.5,444.1L755.9,440.7L715.9,436.2L677.6,430.7L641.7,424.3L608.3,417.1L577.9,409.0L550.7,400.1L527.0,390.7L507.0,380.6L490.9,370.1L478.8,359.3L470.9,348.2L467.3,337.0L467.9,325.7L472.8,314.5L482.0,303.4L495.3,292.7L512.6,282.3L533.7,272.4L558.5,263.2L586.7,254.5L618.0,246.7L652.2,239.6L688.9,233.5L727.7,228.3L768.3,224.2L810.2,221.1L853.2,219.0Z" fill="none" stroke="#f2a42c" stroke-width="1" shape-rendering="crispEdges"/>
<path d="M618.0,246.7L652.2,239.6" stroke="#fff" stroke-width="1.4" fill="none"/>
<!-- manipulator + 3d cursor -->
<g fill="none">
<line x1="911.5" y1="319" x2="911.5" y2="268" stroke="#1414f0" stroke-width="1"/>
<path d="M907.3,270.5L911.5,254L915.7,270.5Z" fill="#1414f0"/>
<line x1="926" y1="334.5" x2="976" y2="337.5" stroke="#e81414" stroke-width="1"/>
<path d="M974,334L991,338.5L974,343Z" fill="#e81414"/>
<line x1="915" y1="330" x2="926" y2="320" stroke="#2d9a2d" stroke-width="1"/>
<path d="M925,318.5a5,4.5 -20 1,0 9,-3a5,4.5 -20 1,0 -9,3Z" fill="#1fc01f"/>
<circle cx="912" cy="333.5" r="14.5" stroke="#fff" stroke-width="1.2"/>
</g>
<!-- mini axis -->
<g fill="none" stroke-width="2">
<line x1="185.5" y1="894" x2="185.5" y2="869" stroke="#1a1ae0"/>
<line x1="186" y1="893.5" x2="191.5" y2="888" stroke="#3cc83c" stroke-width="1.6"/>
<line x1="188" y1="894.5" x2="208" y2="894.5" stroke="#d01818"/>
</g>
</svg>
<svg style="left:0px;top:0px;" width="20" height="20" viewBox="0 0 20 20"><g fill="#f08a1f"><circle cx="12" cy="10.7" r="5.7"/><path d="M8.4,4.6L9.9,3.6L15.2,7.4L11,8Z"/><path d="M3.8,7.1H11V9.2H3.8Z"/><path d="M2.2,12.7L8,8.4V11.6L4.4,13.9H2.6Z"/></g><circle cx="12.1" cy="10.6" r="3.3" fill="#fff"/><circle cx="12.1" cy="10.6" r="1.9" fill="#16509c"/></svg>
<span class="t" style="left:23px;top:3.5px;font-size:12.5px;color:#111;letter-spacing:-0.516px;">Blender</span>
<svg style="left:1798px;top:4px;" width="12" height="12" viewBox="0 0 12 12"><path d="M1,6.5H11" stroke="#111" stroke-width="1"/></svg>
<svg style="left:1843px;top:4px;" width="12" height="12" viewBox="0 0 12 12"><path d="M1.5,3.5H8.5V10.5H1.5Z M3.5,3.5V1.5H10.5V8.5H8.5" stroke="#111" stroke-width="1" fill="none"/></svg>
<svg style="left:1889px;top:4px;" width="12" height="12" viewBox="0 0 12 12"><path d="M1,1L11,11M11,1L1,11" stroke="#111" stroke-width="1.1"/></svg>
<svg style="left:0px;top:37px;" width="12" height="12" viewBox="0 0 12 12"><path d="M0,8L4,12" stroke="#3a3a3a" stroke-width="1"/><path d="M0,7L5,12" stroke="#9a9a9a" stroke-width="1"/><path d="M0,5L7,12" stroke="#3a3a3a" stroke-width="1"/><path d="M0,4L8,12" stroke="#9a9a9a" stroke-width="1"/><path d="M0,2L10,12" stroke="#3a3a3a" stroke-width="1"/><path d="M0,1L11,12" stroke="#9a9a9a" stroke-width="1"/></svg>
<svg style="left:1908px;top:23px;" width="12" height="12" viewBox="0 0 12 12"><path d="M8,0L12,4" stroke="#3a3a3a" stroke-width="1"/><path d="M7,0L12,5" stroke="#9a9a9a" stroke-width="1"/><path d="M5,0L12,7" stroke="#3a3a3a" stroke-width="1"/><path d="M4,0L12,8" stroke="#9a9a9a" stroke-width="1"/><path d="M2,0L12,10" stroke="#3a3a3a" stroke-width="1"/><path d="M1,0L12,11" stroke="#9a9a9a" stroke-width="1"/></svg>
<div class="w menu" style="left:8px;top:27px;width:30px;height:20px;border-radius:4px;"></div>
<svg style="left:13px;top:30px;" width="14" height="14" viewBox="0 0 14 14"><circle cx="7" cy="7" r="6.3" fill="#2f5fa8" stroke="#e8e8e8" stroke-width="1.2"/><path d="M5.6,5.6H7.9V10H9V11H5.4V10H6.5V6.6H5.6Z" fill="#fff"/><circle cx="7.1" cy="3.6" r="1.1" fill="#fff"/></svg>
<svg style="left:27px;top:30px;" width="8" height="14" viewBox="0 0 8 14"><path d="M4,1L7.2,5.6H0.8Z" fill="#adadad"/><path d="M4,13L7.2,8.4H0.8Z" fill="#adadad"/></svg>
<span class="t" style="left:50px;top:30.0px;font-size:11.5px;color:#000;letter-spacing:-0.179px;">File</span>
<span class="t" style="left:88px;top:30.0px;font-size:11.5px;color:#000;letter-spacing:-0.547px;">Render</span>
<span class="t" style="left:143px;top:30.0px;font-size:11.5px;color:#000;letter-spacing:-0.182px;">Window</span>
<span class="t" style="left:203px;top:30.0px;font-size:11.5px;color:#000;letter-spacing:0.113px;">Help</span>
<div class="w menu" style="left:240px;top:27px;width:31px;height:20px;border-radius:4px 0px 0px 4px;"></div>
<svg style="left:246px;top:31px;" width="12" height="12" viewBox="0 0 12 12"><rect x="0.5" y="0.5" width="4.6" height="6" fill="#e6e6e6"/><rect x="0.5" y="7.8" width="4.6" height="3.4" fill="#e6e6e6"/><rect x="6.4" y="0.5" width="5" height="10.7" fill="#e6e6e6"/><rect x="1.2" y="9.6" width="3" height="1" fill="#555"/><rect x="7.2" y="9.6" width="3.4" height="1" fill="#555"/></svg>
<svg style="left:260px;top:30px;" width="8" height="14" viewBox="0 0 8 14"><path d="M4,1L7.2,5.6H0.8Z" fill="#adadad"/><path d="M4,13L7.2,8.4H0.8Z" fill="#adadad"/></svg>
<div class="w txt" style="left:270px;top:27px;width:122px;height:20px;background:linear-gradient(#8b8b8b,#a4a4a4);"></div>
<span class="t" style="left:278px;top:30.0px;font-size:11.5px;color:#000;letter-spacing:0.093px;">Default</span>
<div class="w tool" style="left:391px;top:27px;width:21px;height:20px;"></div>
<div class="w tool" style="left:411px;top:27px;width:21px;height:20px;border-radius:0px 4px 4px 0px;"></div>
<svg style="left:395px;top:31px;" width="13" height="13" viewBox="0 0 13 13"><path d="M6.5,0.8V12.2M0.8,6.5H12.2" stroke="#1a1a1a" stroke-width="4"/><path d="M6.5,1.8V11.2M1.8,6.5H11.2" stroke="#f4f4f4" stroke-width="2"/></svg>
<svg style="left:415px;top:31px;" width="13" height="13" viewBox="0 0 13 13"><path d="M1.6,1.6L11.4,11.4M11.4,1.6L1.6,11.4" stroke="#1a1a1a" stroke-width="4"/><path d="M2.4,2.4L10.6,10.6M10.6,2.4L2.4,10.6" stroke="#f4f4f4" stroke-width="2"/></svg>
<div class="w menu" style="left:437px;top:27px;width:31px;height:20px;border-radius:4px 0px 0px 4px;"></div>
<svg style="left:442px;top:29px;" width="16" height="16" viewBox="0 0 14 14"><circle cx="3" cy="2.6" r="1.9" fill="#d8e86a"/><circle cx="3" cy="2.6" r="0.9" fill="#fffbd0"/><path d="M7.6,2.6a2.5,1.3 0 0,1 5,0V9.2a2.5,1.3 0 0,1 -5,0Z" fill="#3f74cc" stroke="#1c3f80" stroke-width="0.5"/><path d="M8.6,3V9.6" stroke="#cfe2ff" stroke-width="1.3"/><ellipse cx="10.1" cy="2.6" rx="2.5" ry="1.3" fill="#b4cff5"/><circle cx="5" cy="10" r="3.4" fill="#e4e4e4" stroke="#262626" stroke-width="0.8"/><circle cx="4.1" cy="9" r="1.3" fill="#fff"/></svg>
<svg style="left:457px;top:30px;" width="8" height="14" viewBox="0 0 8 14"><path d="M4,1L7.2,5.6H0.8Z" fill="#adadad"/><path d="M4,13L7.2,8.4H0.8Z" fill="#adadad"/></svg>
<div class="w txt" style="left:467px;top:27px;width:121px;height:20px;background:linear-gradient(#8b8b8b,#a4a4a4);"></div>
<span class="t" style="left:475px;top:30.0px;font-size:11.5px;color:#000;letter-spacing:-0.655px;">Scene</span>
<div class="w tool" style="left:587px;top:27px;width:21px;height:20px;"></div>
<div class="w tool" style="left:607px;top:27px;width:21px;height:20px;border-radius:0px 4px 4px 0px;"></div>
<svg style="left:591px;top:31px;" width="13" height="13" viewBox="0 0 13 13"><path d="M6.5,0.8V12.2M0.8,6.5H12.2" stroke="#1a1a1a" stroke-width="4"/><path d="M6.5,1.8V11.2M1.8,6.5H11.2" stroke="#f4f4f4" stroke-width="2"/></svg>
<svg style="left:611px;top:31px;" width="13" height="13" viewBox="0 0 13 13"><path d="M1.6,1.6L11.4,11.4M11.4,1.6L1.6,11.4" stroke="#1a1a1a" stroke-width="4"/><path d="M2.4,2.4L10.6,10.6M10.6,2.4L2.4,10.6" stroke="#f4f4f4" stroke-width="2"/></svg>
<div class="w menu" style="left:644px;top:27px;width:111px;height:20px;border-radius:4px;"></div>
<span class="t" style="left:652px;top:30.0px;font-size:11.5px;color:#fff;letter-spacing:-0.350px;">Blender Render</span>
<svg style="left:744px;top:30px;" width="8" height="14" viewBox="0 0 8 14"><path d="M4,1L7.2,5.6H0.8Z" fill="#bebebe"/><path d="M4,13L7.2,8.4H0.8Z" fill="#bebebe"/></svg>
<svg style="left:771px;top:27px;" width="20" height="20" viewBox="0 0 20 20"><g fill="#f08a1f"><circle cx="12" cy="10.7" r="5.7"/><path d="M8.4,4.6L9.9,3.6L15.2,7.4L11,8Z"/><path d="M3.8,7.1H11V9.2H3.8Z"/><path d="M2.2,12.7L8,8.4V11.6L4.4,13.9H2.6Z"/></g><circle cx="12.1" cy="10.6" r="3.3" fill="#fff"/><circle cx="12.1" cy="10.6" r="1.9" fill="#16509c"/></svg>
<span class="t" style="left:799px;top:30.0px;font-size:11.5px;color:#000;letter-spacing:0.024px;">v2.78 | Verts:64/1,601 | Edges:64/3,200 | Faces:1/1,601 | Tris:3,198 | Mem:10.76M | Cylinder</span>
<div style="left:0px;top:50px;width:160px;height:870px;background:#727272"></div>
<div style="left:0px;top:50px;width:19px;height:654px;background:#4c4c4c"></div>
<div style="left:19px;top:50px;width:1px;height:654px;background:#555"></div>
<div style="left:2px;top:55px;width:18px;height:38px;background:#727272;border:1px solid #474747;border-right:none;border-radius:4px 0 0 4px;"></div>
<span class="t" style="left:11px;top:66.0px;color:#000;-webkit-text-stroke:0.35px #000;letter-spacing:0.287px;transform:translateX(-50%) rotate(-90deg);transform-origin:50% 50%;">Tools</span>
<div style="left:2px;top:98px;width:17px;height:43px;background:#5f5f5f;border:1px solid #474747;border-right:1px solid #474747;border-radius:4px 0 0 4px;"></div>
<span class="t" style="left:11px;top:111.5px;color:#0a0a0a;-webkit-text-stroke:0.35px #0a0a0a;letter-spacing:-0.303px;transform:translateX(-50%) rotate(-90deg);transform-origin:50% 50%;">Create</span>
<div style="left:2px;top:146px;width:17px;height:78px;background:#5f5f5f;border:1px solid #474747;border-right:1px solid #474747;border-radius:4px 0 0 4px;"></div>
<span class="t" style="left:11px;top:177.0px;color:#0a0a0a;-webkit-text-stroke:0.35px #0a0a0a;letter-spacing:-0.294px;transform:translateX(-50%) rotate(-90deg);transform-origin:50% 50%;">Shading / UVs</span>
<div style="left:2px;top:231px;width:17px;height:48px;background:#5f5f5f;border:1px solid #474747;border-right:1px solid #474747;border-radius:4px 0 0 4px;"></div>
<span class="t" style="left:11px;top:247.0px;color:#0a0a0a;-webkit-text-stroke:0.35px #0a0a0a;letter-spacing:-0.107px;transform:translateX(-50%) rotate(-90deg);transform-origin:50% 50%;">Options</span>
<div style="left:2px;top:285px;width:17px;height:78px;background:#5f5f5f;border:1px solid #474747;border-right:1px solid #474747;border-radius:4px 0 0 4px;"></div>
<span class="t" style="left:11px;top:316.0px;color:#0a0a0a;-webkit-text-stroke:0.35px #0a0a0a;letter-spacing:-0.352px;transform:translateX(-50%) rotate(-90deg);transform-origin:50% 50%;">Grease Pencil</span>
<div style="left:142px;top:55px;width:13px;height:644px;background:#5a5a5a;border:1px solid #484848;border-radius:6px;"></div>
<div style="left:142px;top:55px;width:13px;height:604px;background:linear-gradient(90deg,#8a8a8a,#7c7c7c);border:1px solid #4a4a4a;border-radius:6px;"></div>
<svg style="left:32.5px;top:58px;" width="9" height="8" viewBox="0 0 9 8"><path d="M0.3,0.5H8.7L4.5,7.8Z" fill="#1a1a1a"/></svg>
<span class="t" style="left:45px;top:54.0px;font-size:12.5px;color:#111;letter-spacing:-0.062px;">Transform</span>
<svg style="left:119px;top:59.5px;" width="12" height="6" viewBox="0 0 12 6"><rect x="0" y="0" width="1" height="1" fill="#cfcfcf"/><rect x="0" y="1" width="1" height="1" fill="#4a4a4a" opacity="0.5"/><rect x="0" y="3" width="1" height="1" fill="#cfcfcf"/><rect x="0" y="4" width="1" height="1" fill="#4a4a4a" opacity="0.5"/><rect x="3" y="0" width="1" height="1" fill="#cfcfcf"/><rect x="3" y="1" width="1" height="1" fill="#4a4a4a" opacity="0.5"/><rect x="3" y="3" width="1" height="1" fill="#cfcfcf"/><rect x="3" y="4" width="1" height="1" fill="#4a4a4a" opacity="0.5"/><rect x="6" y="0" width="1" height="1" fill="#cfcfcf"/><rect x="6" y="1" width="1" height="1" fill="#4a4a4a" opacity="0.5"/><rect x="6" y="3" width="1" height="1" fill="#cfcfcf"/><rect x="6" y="4" width="1" height="1" fill="#4a4a4a" opacity="0.5"/><rect x="9" y="0" width="1" height="1" fill="#cfcfcf"/><rect x="9" y="1" width="1" height="1" fill="#4a4a4a" opacity="0.5"/><rect x="9" y="3" width="1" height="1" fill="#cfcfcf"/><rect x="9" y="4" width="1" height="1" fill="#4a4a4a" opacity="0.5"/></svg>
<div class="w tool" style="left:28px;top:82px;width:105px;height:20px;border-radius:4px 4px 0px 0px;"></div>
<span class="t" style="left:36px;top:85.0px;font-size:11.5px;color:#000;letter-spacing:-0.314px;">Translate</span>
<div class="w tool" style="left:28px;top:101px;width:105px;height:21px;"></div>
<span class="t" style="left:36px;top:104.0px;font-size:11.5px;color:#000;letter-spacing:-0.177px;">Rotate</span>
<div class="w tool" style="left:28px;top:121px;width:105px;height:21px;"></div>
<span class="t" style="left:36px;top:124.0px;font-size:11.5px;color:#000;letter-spacing:-0.446px;">Scale</span>
<div class="w tool" style="left:28px;top:141px;width:105px;height:21px;"></div>
<span class="t" style="left:36px;top:144.0px;font-size:11.5px;color:#000;letter-spacing:-0.200px;">Shrink/Fatten</span>
<div class="w tool" style="left:28px;top:161px;width:105px;height:20px;border-radius:0px 0px 4px 4px;"></div>
<span class="t" style="left:36px;top:164.0px;font-size:11.5px;color:#000;letter-spacing:-0.573px;">Push/Pull</span>
<div style="left:25px;top:190px;width:112px;height:1px;background:#5c5c5c"></div>
<div style="left:25px;top:191px;width:112px;height:1px;background:#7e7e7e"></div>
<svg style="left:32.5px;top:198px;" width="9" height="8" viewBox="0 0 9 8"><path d="M0.3,0.5H8.7L4.5,7.8Z" fill="#1a1a1a"/></svg>
<span class="t" style="left:45px;top:194.0px;font-size:12.5px;color:#111;letter-spacing:-0.111px;">Mesh Tools</span>
<svg style="left:119px;top:199.5px;" width="12" height="6" viewBox="0 0 12 6"><rect x="0" y="0" width="1" height="1" fill="#cfcfcf"/><rect x="0" y="1" width="1" height="1" fill="#4a4a4a" opacity="0.5"/><rect x="0" y="3" width="1" height="1" fill="#cfcfcf"/><rect x="0" y="4" width="1" height="1" fill="#4a4a4a" opacity="0.5"/><rect x="3" y="0" width="1" height="1" fill="#cfcfcf"/><rect x="3" y="1" width="1" height="1" fill="#4a4a4a" opacity="0.5"/><rect x="3" y="3" width="1" height="1" fill="#cfcfcf"/><rect x="3" y="4" width="1" height="1" fill="#4a4a4a" opacity="0.5"/><rect x="6" y="0" width="1" height="1" fill="#cfcfcf"/><rect x="6" y="1" width="1" height="1" fill="#4a4a4a" opacity="0.5"/><rect x="6" y="3" width="1" height="1" fill="#cfcfcf"/><rect x="6" y="4" width="1" height="1" fill="#4a4a4a" opacity="0.5"/><rect x="9" y="0" width="1" height="1" fill="#cfcfcf"/><rect x="9" y="1" width="1" height="1" fill="#4a4a4a" opacity="0.5"/><rect x="9" y="3" width="1" height="1" fill="#cfcfcf"/><rect x="9" y="4" width="1" height="1" fill="#4a4a4a" opacity="0.5"/></svg>
<span class="t" style="left:36px;top:225.0px;font-size:11.5px;color:#000;letter-spacing:-0.152px;">Deform:</span>
<div class="w tool" style="left:28px;top:243px;width:53px;height:20px;border-radius:4px 0px 0px 0px;"></div>
<span class="t" style="left:36px;top:244.0px;font-size:11.5px;color:#000;letter-spacing:-0.549px;">Slide Ed</span>
<div class="w tool" style="left:80px;top:243px;width:53px;height:20px;border-radius:0px 4px 0px 0px;"></div>
<span class="t" style="left:88px;top:244.0px;font-size:11.5px;color:#000;letter-spacing:0.078px;">Vertex</span>
<div class="w tool" style="left:28px;top:262px;width:105px;height:21px;"></div>
<span class="t" style="left:36px;top:264.0px;font-size:11.5px;color:#000;letter-spacing:-0.351px;">Noise</span>
<div class="w tool" style="left:28px;top:282px;width:105px;height:21px;"></div>
<span class="t" style="left:36px;top:284.0px;font-size:11.5px;color:#000;letter-spacing:-0.120px;">Smooth Vertex</span>
<div class="w tool" style="left:28px;top:302px;width:105px;height:20px;border-radius:0px 0px 4px 4px;"></div>
<span class="t" style="left:36px;top:304.0px;font-size:11.5px;color:#000;letter-spacing:-0.397px;">Randomize</span>
<span class="t" style="left:36px;top:330.0px;font-size:11.5px;color:#000;letter-spacing:-0.554px;">Add:</span>
<div class="w menu" style="left:28px;top:347px;width:105px;height:20px;border-radius:4px 4px 0px 0px;"></div>
<span class="t" style="left:36px;top:349.0px;font-size:11.5px;color:#fff;letter-spacing:-0.274px;">Extrude</span>
<svg style="left:123px;top:349.5px;" width="8" height="14" viewBox="0 0 8 14"><path d="M4,1L7.2,5.6H0.8Z" fill="#bebebe"/><path d="M4,13L7.2,8.4H0.8Z" fill="#bebebe"/></svg>
<div class="w tool" style="left:28px;top:366px;width:105px;height:21px;"></div>
<span class="t" style="left:36px;top:369.0px;font-size:11.5px;color:#000;letter-spacing:-0.329px;">Extrude Region</span>
<div class="w tool" style="left:28px;top:386px;width:105px;height:21px;"></div>
<span class="t" style="left:36px;top:389.0px;font-size:11.5px;color:#000;letter-spacing:-0.143px;">Extrude Individual</span>
<div class="w tool" style="left:28px;top:406px;width:105px;height:21px;"></div>
<span class="t" style="left:36px;top:409.0px;font-size:11.5px;color:#000;letter-spacing:-0.345px;">Inset Faces</span>
<div class="w tool" style="left:28px;top:426px;width:105px;height:21px;"></div>
<span class="t" style="left:36px;top:429.0px;font-size:11.5px;color:#000;letter-spacing:-0.457px;">Make Edge/Face</span>
<div class="w tool" style="left:28px;top:446px;width:105px;height:21px;"></div>
<span class="t" style="left:36px;top:449.0px;font-size:11.5px;color:#000;letter-spacing:-0.314px;">Subdivide</span>
<div class="w tool" style="left:28px;top:466px;width:105px;height:21px;"></div>
<span class="t" style="left:36px;top:469.0px;font-size:11.5px;color:#000;letter-spacing:-0.343px;">Loop Cut and Slide</span>
<div class="w tool" style="left:28px;top:486px;width:105px;height:21px;"></div>
<span class="t" style="left:36px;top:489.0px;font-size:11.5px;color:#000;letter-spacing:-0.393px;">Offset Edge Slide</span>
<div class="w tool" style="left:28px;top:506px;width:105px;height:21px;"></div>
<span class="t" style="left:36px;top:509.0px;font-size:11.5px;color:#000;letter-spacing:0.007px;">Duplicate</span>
<div class="w tool" style="left:28px;top:526px;width:53px;height:21px;"></div>
<span class="t" style="left:36px;top:529.0px;font-size:11.5px;color:#000;letter-spacing:-0.344px;">Spin</span>
<div class="w tool" style="left:80px;top:526px;width:53px;height:21px;"></div>
<span class="t" style="left:88px;top:529.0px;font-size:11.5px;color:#000;letter-spacing:-0.240px;">Screw</span>
<div class="w tool" style="left:28px;top:546px;width:53px;height:21px;"></div>
<span class="t" style="left:36px;top:549.0px;font-size:11.5px;color:#000;letter-spacing:-0.303px;">Knife</span>
<div class="w tool" style="left:80px;top:546px;width:53px;height:21px;"></div>
<span class="t" style="left:88px;top:549.0px;font-size:11.5px;color:#000;letter-spacing:-0.193px;">Select</span>
<div class="w tool" style="left:28px;top:566px;width:105px;height:21px;"></div>
<span class="t" style="left:36px;top:569.0px;font-size:11.5px;color:#000;letter-spacing:-0.184px;">Knife Project</span>
<div class="w tool" style="left:28px;top:586px;width:105px;height:20px;border-radius:0px 0px 4px 4px;"></div>
<span class="t" style="left:36px;top:589.0px;font-size:11.5px;color:#000;letter-spacing:-0.064px;">Bisect</span>
<span class="t" style="left:36px;top:615.0px;font-size:11.5px;color:#000;letter-spacing:-0.338px;">Remove:</span>
<div class="w menu" style="left:28px;top:632px;width:105px;height:20px;border-radius:4px 4px 0px 0px;"></div>
<span class="t" style="left:36px;top:635.0px;font-size:11.5px;color:#fff;letter-spacing:-0.049px;">Delete</span>
<svg style="left:123px;top:634.5px;" width="8" height="14" viewBox="0 0 8 14"><path d="M4,1L7.2,5.6H0.8Z" fill="#bebebe"/><path d="M4,13L7.2,8.4H0.8Z" fill="#bebebe"/></svg>
<div class="w menu" style="left:28px;top:651px;width:105px;height:21px;"></div>
<span class="t" style="left:36px;top:654.0px;font-size:11.5px;color:#fff;letter-spacing:-0.400px;">Merge</span>
<svg style="left:123px;top:654.5px;" width="8" height="14" viewBox="0 0 8 14"><path d="M4,1L7.2,5.6H0.8Z" fill="#bebebe"/><path d="M4,13L7.2,8.4H0.8Z" fill="#bebebe"/></svg>
<div class="w tool" style="left:28px;top:671px;width:105px;height:20px;border-radius:0px 0px 4px 4px;"></div>
<span class="t" style="left:36px;top:674.0px;font-size:11.5px;color:#000;letter-spacing:-0.325px;">Remove Doubles</span>
<div style="left:25px;top:699px;width:112px;height:1px;background:#5c5c5c"></div>
<div style="left:25px;top:700px;width:112px;height:1px;background:#7b7b7b"></div>
<div style="left:0px;top:704px;width:160px;height:216px;background:#747474"></div>
<div style="left:0px;top:704px;width:160px;height:1px;background:#666"></div>
<svg style="left:13.0px;top:712px;" width="9" height="8" viewBox="0 0 9 8"><path d="M0.3,0.5H8.7L4.5,7.8Z" fill="#1a1a1a"/></svg>
<span class="t" style="left:25.5px;top:708.0px;font-size:12.5px;color:#111;letter-spacing:-0.346px;">Make Edge/Face</span>
<svg style="left:138px;top:713.5px;" width="12" height="6" viewBox="0 0 12 6"><rect x="0" y="0" width="1" height="1" fill="#cfcfcf"/><rect x="0" y="1" width="1" height="1" fill="#4a4a4a" opacity="0.5"/><rect x="0" y="3" width="1" height="1" fill="#cfcfcf"/><rect x="0" y="4" width="1" height="1" fill="#4a4a4a" opacity="0.5"/><rect x="3" y="0" width="1" height="1" fill="#cfcfcf"/><rect x="3" y="1" width="1" height="1" fill="#4a4a4a" opacity="0.5"/><rect x="3" y="3" width="1" height="1" fill="#cfcfcf"/><rect x="3" y="4" width="1" height="1" fill="#4a4a4a" opacity="0.5"/><rect x="6" y="0" width="1" height="1" fill="#cfcfcf"/><rect x="6" y="1" width="1" height="1" fill="#4a4a4a" opacity="0.5"/><rect x="6" y="3" width="1" height="1" fill="#cfcfcf"/><rect x="6" y="4" width="1" height="1" fill="#4a4a4a" opacity="0.5"/><rect x="9" y="0" width="1" height="1" fill="#cfcfcf"/><rect x="9" y="1" width="1" height="1" fill="#4a4a4a" opacity="0.5"/><rect x="9" y="3" width="1" height="1" fill="#cfcfcf"/><rect x="9" y="4" width="1" height="1" fill="#4a4a4a" opacity="0.5"/></svg>
<div style="left:159px;top:50px;width:1px;height:870px;background:#5e5e5e"></div>
<div style="left:0px;top:920px;width:1665px;height:27px;background:#6b6b6b"></div>
<div style="left:0px;top:946px;width:1665px;height:1px;background:#0d0d0d"></div>
<svg style="left:0px;top:934px;" width="12" height="12" viewBox="0 0 12 12"><path d="M0,8L4,12" stroke="#3a3a3a" stroke-width="1"/><path d="M0,7L5,12" stroke="#9a9a9a" stroke-width="1"/><path d="M0,5L7,12" stroke="#3a3a3a" stroke-width="1"/><path d="M0,4L8,12" stroke="#9a9a9a" stroke-width="1"/><path d="M0,2L10,12" stroke="#3a3a3a" stroke-width="1"/><path d="M0,1L11,12" stroke="#9a9a9a" stroke-width="1"/></svg>
<div class="w menu" style="left:9px;top:923px;width:30px;height:20px;border-radius:4px;"></div>
<svg style="left:13px;top:926px;" width="14" height="14" viewBox="0 0 14 14"><path d="M1.5,3.2L7,1.2L12.5,3.2V9.8L7,12.6L1.5,9.8Z" fill="#e8e8e8" stroke="#333" stroke-width="0.7"/><path d="M7,5.2V12.6L12.5,9.8V3.2Z" fill="#9a9a9a"/><path d="M1.5,3.2L7,5.2L12.5,3.2L7,1.2Z" fill="#fafafa"/></svg>
<svg style="left:28px;top:926px;" width="8" height="14" viewBox="0 0 8 14"><path d="M4,1L7.2,5.6H0.8Z" fill="#bebebe"/><path d="M4,13L7.2,8.4H0.8Z" fill="#bebebe"/></svg>
<span class="t" style="left:51px;top:926.0px;font-size:11.5px;color:#000;letter-spacing:-0.241px;">View</span>
<span class="t" style="left:96px;top:926.0px;font-size:11.5px;color:#000;letter-spacing:-0.195px;">Select</span>
<span class="t" style="left:147px;top:926.0px;font-size:11.5px;color:#000;letter-spacing:-0.234px;">Add</span>
<span class="t" style="left:186px;top:926.0px;font-size:11.5px;color:#000;letter-spacing:-0.710px;">Mesh</span>
<div class="w menu" style="left:225px;top:923px;width:98px;height:20px;border-radius:4px;"></div>
<svg style="left:229px;top:925px;" width="15" height="15" viewBox="0 0 15 15"><path d="M3,4L8.5,2L13,4V10.5L8,13L3,10.5Z" fill="#b5b5b5" stroke="#555" stroke-width="0.6"/><path d="M8,6V13L13,10.5V4Z" fill="#8a8a8a"/><rect x="1.2" y="2.2" width="3" height="3" fill="#ff9a1a" stroke="#7a3a00" stroke-width="0.5"/><rect x="6.6" y="0.6" width="3" height="3" fill="#ff9a1a" stroke="#7a3a00" stroke-width="0.5"/><rect x="1.2" y="9.2" width="3" height="3" fill="#ff9a1a" stroke="#7a3a00" stroke-width="0.5"/><rect x="6.4" y="5.4" width="3" height="3" fill="#ff9a1a" stroke="#7a3a00" stroke-width="0.5"/></svg>
<span class="t" style="left:249px;top:926.0px;font-size:11.5px;color:#fff;letter-spacing:-0.223px;">Edit Mode</span>
<svg style="left:313px;top:926px;" width="8" height="14" viewBox="0 0 8 14"><path d="M4,1L7.2,5.6H0.8Z" fill="#bebebe"/><path d="M4,13L7.2,8.4H0.8Z" fill="#bebebe"/></svg>
<div class="w menu" style="left:329px;top:923px;width:35px;height:20px;border-radius:4px;"></div>
<svg style="left:334px;top:926px;" width="14" height="14" viewBox="0 0 14 14"><circle cx="7" cy="7" r="5.6" fill="#2a2a2a" stroke="#f0f0f0" stroke-width="1.3"/><path d="M7,1.4V12.6M1.4,7H12.6" stroke="#f0f0f0" stroke-width="1.1"/><ellipse cx="7" cy="7" rx="2.8" ry="5.6" fill="none" stroke="#f0f0f0" stroke-width="1"/></svg>
<svg style="left:353px;top:926px;" width="8" height="14" viewBox="0 0 8 14"><path d="M4,1L7.2,5.6H0.8Z" fill="#adadad"/><path d="M4,13L7.2,8.4H0.8Z" fill="#adadad"/></svg>
<div class="w menu" style="left:369px;top:923px;width:35px;height:20px;border-radius:4px;"></div>
<svg style="left:373px;top:926px;" width="16" height="14" viewBox="0 0 16 14"><circle cx="5" cy="5" r="3.6" fill="#e8e8e8" stroke="#555" stroke-width="0.6"/><circle cx="10.5" cy="9" r="3.6" fill="#e8e8e8" stroke="#555" stroke-width="0.6"/><rect x="5.4" y="5" width="4.2" height="4.2" fill="#3a6fd0" stroke="#cfe0ff" stroke-width="0.8"/></svg>
<svg style="left:393px;top:926px;" width="8" height="14" viewBox="0 0 8 14"><path d="M4,1L7.2,5.6H0.8Z" fill="#adadad"/><path d="M4,13L7.2,8.4H0.8Z" fill="#adadad"/></svg>
<div class="w tsel" style="left:409px;top:923px;width:21px;height:20px;border-radius:4px 0px 0px 4px;"></div>
<svg style="left:412px;top:925px;" width="16" height="16" viewBox="0 0 16 16"><path d="M8,9V2" stroke="#4a9af0" stroke-width="2.2"/><path d="M8,9L2,13.5" stroke="#e8482a" stroke-width="2.2"/><path d="M8,9L14,13.5" stroke="#7ad43a" stroke-width="2.2"/><circle cx="8" cy="2" r="1.2" fill="#fff"/><circle cx="2" cy="13.6" r="1.2" fill="#fff"/><circle cx="14" cy="13.6" r="1.2" fill="#fff"/></svg>
<div class="w rsel" style="left:429px;top:923px;width:20px;height:20px;"></div>
<svg style="left:431px;top:925px;" width="16" height="16" viewBox="0 0 16 16"><path d="M2.5,13.5L11,5" stroke="#1a2a50" stroke-width="3.2"/><path d="M7.2,2.6H13.6V9Z" fill="#1a2a50"/><path d="M2.8,13.2L11,5" stroke="#a9c8f8" stroke-width="1.6"/><path d="M8.8,3.4H12.8V7.4Z" fill="#a9c8f8"/></svg>
<div class="w radio" style="left:448px;top:923px;width:21px;height:20px;"></div>
<svg style="left:451px;top:926px;" width="16" height="14" viewBox="0 0 16 14"><path d="M2,12C3,6 7,2.5 13,2" stroke="#5d78a6" stroke-width="2.2" fill="none"/></svg>
<div class="w radio" style="left:468px;top:923px;width:21px;height:20px;"></div>
<svg style="left:471px;top:925px;" width="16" height="16" viewBox="0 0 16 16"><path d="M2.5,13.5L10,6" stroke="#5d78a6" stroke-width="1.8"/><rect x="9" y="2" width="5" height="5" fill="#5d78a6"/></svg>
<div class="w menu" style="left:488px;top:923px;width:74px;height:20px;border-radius:0px 4px 4px 0px;"></div>
<span class="t" style="left:496px;top:926.0px;font-size:11.5px;color:#fff;letter-spacing:-0.250px;">Global</span>
<svg style="left:551px;top:926px;" width="8" height="14" viewBox="0 0 8 14"><path d="M4,1L7.2,5.6H0.8Z" fill="#bebebe"/><path d="M4,13L7.2,8.4H0.8Z" fill="#bebebe"/></svg>
<div class="w reg" style="left:566px;top:923px;width:21px;height:20px;border-radius:4px 0px 0px 4px;"></div>
<svg style="left:568px;top:925px;" width="16" height="16" viewBox="0 0 16 16"><path d="M2.5,4.5L8,2.5L13.5,4.5V11L8,13.5L2.5,11Z" fill="#b8b8b8" stroke="#777" stroke-width="0.6"/><path d="M8,6.5V13.5L13.5,11V4.5Z" fill="#8c8c8c"/><path d="M2.5,4.5L8,6.5L13.5,4.5L8,2.5Z" fill="#d4d4d4"/><circle cx="2.8" cy="4.3" r="1.6" fill="#e8e8e8" stroke="#666" stroke-width="0.5"/></svg>
<div class="w tsel" style="left:586px;top:923px;width:21px;height:20px;"></div>
<svg style="left:588px;top:925px;" width="16" height="16" viewBox="0 0 16 16"><path d="M2.5,4.5L8,2.5L13.5,4.5V11L8,13.5L2.5,11Z" fill="#b8b8b8" stroke="#777" stroke-width="0.6"/><path d="M8,6.5V13.5L13.5,11V4.5Z" fill="#8c8c8c"/><path d="M2.5,4.5L8,6.5L13.5,4.5L8,2.5Z" fill="#d4d4d4"/><path d="M2.6,4.4V11" stroke="#7a3a00" stroke-width="3"/><path d="M2.6,4.8V10.6" stroke="#ffa530" stroke-width="1.6"/></svg>
<div class="w reg" style="left:606px;top:923px;width:20px;height:20px;border-radius:0px 4px 4px 0px;"></div>
<svg style="left:608px;top:925px;" width="16" height="16" viewBox="0 0 16 16"><path d="M2.5,4.5L8,2.5L13.5,4.5V11L8,13.5L2.5,11Z" fill="#b8b8b8" stroke="#777" stroke-width="0.6"/><path d="M8,6.5V13.5L13.5,11V4.5Z" fill="#8c8c8c"/><path d="M2.5,4.5L8,6.5L13.5,4.5L8,2.5Z" fill="#d4d4d4"/><path d="M2.8,4.8L8,6.7V13.2L2.8,10.8Z" fill="#f0b56a" stroke="#a86414" stroke-width="0.7"/></svg>
<div class="w menu" style="left:631px;top:923px;width:35px;height:20px;border-radius:4px;"></div>
<svg style="left:637px;top:926px;" width="14" height="14" viewBox="0 0 14 14"><circle cx="7" cy="7" r="5" fill="#8a8a8a" stroke="#6a6a6a" stroke-width="1.6"/></svg>
<svg style="left:655px;top:926px;" width="8" height="14" viewBox="0 0 8 14"><path d="M4,1L7.2,5.6H0.8Z" fill="#adadad"/><path d="M4,13L7.2,8.4H0.8Z" fill="#adadad"/></svg>
<div class="w reg" style="left:671px;top:923px;width:20px;height:20px;border-radius:4px 0px 0px 4px;"></div>
<svg style="left:673px;top:925px;" width="16" height="16" viewBox="0 0 16 16"><path d="M3,9.5L9,3.5A3.6,3.6 0 0,1 14,8.5L8,14.5" fill="none" stroke="#6a6a6a" stroke-width="3.6"/><path d="M3,9.5L9,3.5A3.6,3.6 0 0,1 14,8.5L8,14.5" fill="none" stroke="#c4c4c4" stroke-width="1.8"/></svg>
<div class="w menu" style="left:690px;top:923px;width:37px;height:20px;"></div>
<svg style="left:694px;top:926px;" width="18" height="14" viewBox="0 0 18 14"><path d="M2,3V11M5.5,5V9M12.5,5V9M16,3V11M2,7H16" stroke="#d8d8d8" stroke-width="1.1"/><path d="M9,1.5V12.5" stroke="#6aa8ff" stroke-width="2.4"/><path d="M9,2V12" stroke="#e8f2ff" stroke-width="1"/></svg>
<svg style="left:715px;top:926px;" width="8" height="14" viewBox="0 0 8 14"><path d="M4,1L7.2,5.6H0.8Z" fill="#adadad"/><path d="M4,13L7.2,8.4H0.8Z" fill="#adadad"/></svg>
<div class="w reg" style="left:726px;top:923px;width:20px;height:20px;border-radius:0px 4px 4px 0px;"></div>
<svg style="left:728px;top:925px;" width="16" height="16" viewBox="0 0 16 16"><path d="M5,7V15M10,7V15M14,7V15M1,9H15M1,13H15" stroke="#f4f4f4" stroke-width="1.2"/><circle cx="5" cy="4.5" r="3.6" fill="#3a78d8" stroke="#e8f0ff" stroke-width="1"/><circle cx="5" cy="4.5" r="1.3" fill="#fff"/></svg>
<div class="w reg" style="left:752px;top:923px;width:19px;height:20px;border-radius:4px;"></div>
<svg style="left:754px;top:925px;" width="16" height="16" viewBox="0 0 16 16"><path d="M2,14L7,9M14,2L9,7" stroke="#3a3a3a" stroke-width="3"/><path d="M3.5,8H8V12.5ZM12.5,8H8V3.5Z" fill="#f2f2f2" stroke="#3a3a3a" stroke-width="0.7"/><path d="M2,14L7,9M14,2L9,7" stroke="#f2f2f2" stroke-width="1.3"/><circle cx="2" cy="14" r="1.3" fill="#ffb030"/><circle cx="14" cy="2" r="1.3" fill="#ffb030"/></svg>
<div class="w reg" style="left:777px;top:923px;width:20px;height:20px;border-radius:4px 0px 0px 4px;"></div>
<svg style="left:778px;top:925px;" width="17" height="16" viewBox="0 0 17 16"><rect x="1.5" y="4.6" width="13" height="9.6" rx="1.2" fill="#d6d6d6" stroke="#1e1e1e" stroke-width="0.9"/><rect x="2.6" y="2.8" width="4.2" height="2.2" fill="#bdbdbd" stroke="#1e1e1e" stroke-width="0.7"/><rect x="2.2" y="5.4" width="11.6" height="1.8" fill="#555"/><circle cx="8.4" cy="9.8" r="3.3" fill="#3a3a3a" stroke="#111" stroke-width="0.7"/><circle cx="8.4" cy="9.8" r="1.9" fill="#c04848"/><circle cx="7.7" cy="9.1" r="0.7" fill="#ffd0d0"/><path d="M13,0.3L13.8,2.6L16,3.4L13.8,4.2L13,6.5L12.2,4.2L10,3.4L12.2,2.6Z" fill="#ffe960"/></svg>
<div class="w reg" style="left:796px;top:923px;width:20px;height:20px;border-radius:0px 4px 4px 0px;"></div>
<svg style="left:798px;top:925px;" width="16" height="16" viewBox="0 0 16 16"><rect x="2.5" y="7" width="12" height="7.5" fill="#2c2c2c" stroke="#111" stroke-width="0.6"/><path d="M2.2,6.6L13.6,2.2L14.6,4.6L3.2,9Z" fill="#2c2c2c" stroke="#111" stroke-width="0.5"/><path d="M4.6,5.8L6.2,7.4M7.6,4.6L9.2,6.2M10.6,3.4L12.2,5" stroke="#f0f0f0" stroke-width="1.5"/><rect x="3.5" y="9" width="10" height="1.2" fill="#e8e8e8"/><rect x="3.5" y="11.6" width="10" height="1.2" fill="#bbb"/><rect x="1.4" y="5.6" width="1.6" height="3.6" fill="#6a9af0"/></svg>
<div style="left:0px;top:947px;width:1665px;height:67px;background:#747474"></div>
<div style="left:0px;top:947px;width:283px;height:49px;background:#464646"></div>
<div style="left:1502px;top:947px;width:163px;height:49px;background:#464646"></div>
<svg style="left:0px;top:947px;" width="1665" height="49" viewBox="0 0 1665 49"><path d="M38.5,0V49" stroke="#3a3a3a" stroke-width="1"/><path d="M63.5,0V49" stroke="#464646" stroke-width="1"/><path d="M87.5,0V49" stroke="#3a3a3a" stroke-width="1"/><path d="M112.5,0V49" stroke="#464646" stroke-width="1"/><path d="M136.5,0V49" stroke="#3a3a3a" stroke-width="1"/><path d="M160.5,0V49" stroke="#464646" stroke-width="1"/><path d="M185.5,0V49" stroke="#3a3a3a" stroke-width="1"/><path d="M209.5,0V49" stroke="#464646" stroke-width="1"/><path d="M234.5,0V49" stroke="#3a3a3a" stroke-width="1"/><path d="M258.5,0V49" stroke="#464646" stroke-width="1"/><path d="M282.5,0V49" stroke="#3a3a3a" stroke-width="1"/><path d="M307.5,0V49" stroke="#6f6f6f" stroke-width="1"/><path d="M331.5,0V49" stroke="#616161" stroke-width="1"/><path d="M356.5,0V49" stroke="#6f6f6f" stroke-width="1"/><path d="M380.5,0V49" stroke="#616161" stroke-width="1"/><path d="M404.5,0V49" stroke="#6f6f6f" stroke-width="1"/><path d="M429.5,0V49" stroke="#616161" stroke-width="1"/><path d="M453.5,0V49" stroke="#6f6f6f" stroke-width="1"/><path d="M478.5,0V49" stroke="#616161" stroke-width="1"/><path d="M502.5,0V49" stroke="#6f6f6f" stroke-width="1"/><path d="M527.5,0V49" stroke="#616161" stroke-width="1"/><path d="M551.5,0V49" stroke="#6f6f6f" stroke-width="1"/><path d="M575.5,0V49" stroke="#616161" stroke-width="1"/><path d="M600.5,0V49" stroke="#6f6f6f" stroke-width="1"/><path d="M624.5,0V49" stroke="#616161" stroke-width="1"/><path d="M649.5,0V49" stroke="#6f6f6f" stroke-width="1"/><path d="M673.5,0V49" stroke="#616161" stroke-width="1"/><path d="M697.5,0V49" stroke="#6f6f6f" stroke-width="1"/><path d="M722.5,0V49" stroke="#616161" stroke-width="1"/><path d="M746.5,0V49" stroke="#6f6f6f" stroke-width="1"/><path d="M771.5,0V49" stroke="#616161" stroke-width="1"/><path d="M795.5,0V49" stroke="#6f6f6f" stroke-width="1"/><path d="M819.5,0V49" stroke="#616161" stroke-width="1"/><path d="M844.5,0V49" stroke="#6f6f6f" stroke-width="1"/><path d="M868.5,0V49" stroke="#616161" stroke-width="1"/><path d="M893.5,0V49" stroke="#6f6f6f" stroke-width="1"/><path d="M917.5,0V49" stroke="#616161" stroke-width="1"/><path d="M942.5,0V49" stroke="#6f6f6f" stroke-width="1"/><path d="M966.5,0V49" stroke="#616161" stroke-width="1"/><path d="M990.5,0V49" stroke="#6f6f6f" stroke-width="1"/><path d="M1015.5,0V49" stroke="#616161" stroke-width="1"/><path d="M1039.5,0V49" stroke="#6f6f6f" stroke-width="1"/><path d="M1064.5,0V49" stroke="#616161" stroke-width="1"/><path d="M1088.5,0V49" stroke="#6f6f6f" stroke-width="1"/><path d="M1112.5,0V49" stroke="#616161" stroke-width="1"/><path d="M1137.5,0V49" stroke="#6f6f6f" stroke-width="1"/><path d="M1161.5,0V49" stroke="#616161" stroke-width="1"/><path d="M1186.5,0V49" stroke="#6f6f6f" stroke-width="1"/><path d="M1210.5,0V49" stroke="#616161" stroke-width="1"/><path d="M1235.5,0V49" stroke="#6f6f6f" stroke-width="1"/><path d="M1259.5,0V49" stroke="#616161" stroke-width="1"/><path d="M1283.5,0V49" stroke="#6f6f6f" stroke-width="1"/><path d="M1308.5,0V49" stroke="#616161" stroke-width="1"/><path d="M1332.5,0V49" stroke="#6f6f6f" stroke-width="1"/><path d="M1357.5,0V49" stroke="#616161" stroke-width="1"/><path d="M1381.5,0V49" stroke="#6f6f6f" stroke-width="1"/><path d="M1405.5,0V49" stroke="#616161" stroke-width="1"/><path d="M1430.5,0V49" stroke="#6f6f6f" stroke-width="1"/><path d="M1454.5,0V49" stroke="#616161" stroke-width="1"/><path d="M1479.5,0V49" stroke="#6f6f6f" stroke-width="1"/><path d="M1503.5,0V49" stroke="#3a3a3a" stroke-width="1"/><path d="M1527.5,0V49" stroke="#464646" stroke-width="1"/><path d="M1552.5,0V49" stroke="#3a3a3a" stroke-width="1"/><path d="M1576.5,0V49" stroke="#464646" stroke-width="1"/><path d="M1601.5,0V49" stroke="#3a3a3a" stroke-width="1"/><path d="M1625.5,0V49" stroke="#464646" stroke-width="1"/><path d="M1650.5,0V49" stroke="#3a3a3a" stroke-width="1"/><path d="M1674.5,0V49" stroke="#464646" stroke-width="1"/></svg>
<div style="left:283px;top:947px;width:2px;height:49px;background:#3c3c3c"></div>
<div style="left:286px;top:947px;width:4px;height:50px;background:#58c24a"></div>
<div style="left:4px;top:997px;width:1656px;height:12px;background:linear-gradient(#8b8b8b,#7a7a7a);border:1px solid #4f4f4f;border-radius:6px;"></div>
<div style="left:5px;top:998px;width:12px;height:10px;background:#636363;border-radius:5px;"></div>
<div style="left:1646px;top:998px;width:12px;height:10px;background:#636363;border-radius:5px;"></div>
<span class="t" style="left:39.349999999999994px;transform:translateX(-50%);top:995.5px;font-size:12.3px;color:#0c0c0c;">-50</span>
<span class="t" style="left:87.9px;transform:translateX(-50%);top:995.5px;font-size:12.3px;color:#0c0c0c;">-40</span>
<span class="t" style="left:136.45000000000002px;transform:translateX(-50%);top:995.5px;font-size:12.3px;color:#0c0c0c;">-30</span>
<span class="t" style="left:185.0px;transform:translateX(-50%);top:995.5px;font-size:12.3px;color:#0c0c0c;">-20</span>
<span class="t" style="left:233.55px;transform:translateX(-50%);top:995.5px;font-size:12.3px;color:#0c0c0c;">-10</span>
<span class="t" style="left:284.6px;transform:translateX(-50%);top:995.5px;font-size:12.3px;color:#0c0c0c;">0</span>
<span class="t" style="left:333.15000000000003px;transform:translateX(-50%);top:995.5px;font-size:12.3px;color:#0c0c0c;">10</span>
<span class="t" style="left:381.70000000000005px;transform:translateX(-50%);top:995.5px;font-size:12.3px;color:#0c0c0c;">20</span>
<span class="t" style="left:430.25px;transform:translateX(-50%);top:995.5px;font-size:12.3px;color:#0c0c0c;">30</span>
<span class="t" style="left:478.80000000000007px;transform:translateX(-50%);top:995.5px;font-size:12.3px;color:#0c0c0c;">40</span>
<span class="t" style="left:527.35px;transform:translateX(-50%);top:995.5px;font-size:12.3px;color:#0c0c0c;">50</span>
<span class="t" style="left:575.9000000000001px;transform:translateX(-50%);top:995.5px;font-size:12.3px;color:#0c0c0c;">60</span>
<span class="t" style="left:624.45px;transform:translateX(-50%);top:995.5px;font-size:12.3px;color:#0c0c0c;">70</span>
<span class="t" style="left:673.0px;transform:translateX(-50%);top:995.5px;font-size:12.3px;color:#0c0c0c;">80</span>
<span class="t" style="left:721.5500000000001px;transform:translateX(-50%);top:995.5px;font-size:12.3px;color:#0c0c0c;">90</span>
<span class="t" style="left:770.1000000000001px;transform:translateX(-50%);top:995.5px;font-size:12.3px;color:#0c0c0c;">100</span>
<span class="t" style="left:818.6500000000001px;transform:translateX(-50%);top:995.5px;font-size:12.3px;color:#0c0c0c;">110</span>
<span class="t" style="left:867.2px;transform:translateX(-50%);top:995.5px;font-size:12.3px;color:#0c0c0c;">120</span>
<span class="t" style="left:915.7500000000001px;transform:translateX(-50%);top:995.5px;font-size:12.3px;color:#0c0c0c;">130</span>
<span class="t" style="left:964.3000000000001px;transform:translateX(-50%);top:995.5px;font-size:12.3px;color:#0c0c0c;">140</span>
<span class="t" style="left:1012.8500000000001px;transform:translateX(-50%);top:995.5px;font-size:12.3px;color:#0c0c0c;">150</span>
<span class="t" style="left:1061.4px;transform:translateX(-50%);top:995.5px;font-size:12.3px;color:#0c0c0c;">160</span>
<span class="t" style="left:1109.95px;transform:translateX(-50%);top:995.5px;font-size:12.3px;color:#0c0c0c;">170</span>
<span class="t" style="left:1158.5px;transform:translateX(-50%);top:995.5px;font-size:12.3px;color:#0c0c0c;">180</span>
<span class="t" style="left:1207.0500000000002px;transform:translateX(-50%);top:995.5px;font-size:12.3px;color:#0c0c0c;">190</span>
<span class="t" style="left:1255.6000000000001px;transform:translateX(-50%);top:995.5px;font-size:12.3px;color:#0c0c0c;">200</span>
<span class="t" style="left:1304.15px;transform:translateX(-50%);top:995.5px;font-size:12.3px;color:#0c0c0c;">210</span>
<span class="t" style="left:1352.7000000000003px;transform:translateX(-50%);top:995.5px;font-size:12.3px;color:#0c0c0c;">220</span>
<span class="t" style="left:1401.25px;transform:translateX(-50%);top:995.5px;font-size:12.3px;color:#0c0c0c;">230</span>
<span class="t" style="left:1449.8000000000002px;transform:translateX(-50%);top:995.5px;font-size:12.3px;color:#0c0c0c;">240</span>
<span class="t" style="left:1498.35px;transform:translateX(-50%);top:995.5px;font-size:12.3px;color:#0c0c0c;">250</span>
<span class="t" style="left:1546.9px;transform:translateX(-50%);top:995.5px;font-size:12.3px;color:#0c0c0c;">260</span>
<span class="t" style="left:1595.4500000000003px;transform:translateX(-50%);top:995.5px;font-size:12.3px;color:#0c0c0c;">270</span>
<span class="t" style="left:1644.0px;transform:translateX(-50%);top:995.5px;font-size:12.3px;color:#0c0c0c;">280</span>
<svg style="left:1653px;top:947px;" width="12" height="12" viewBox="0 0 12 12"><path d="M8,0L12,4" stroke="#3a3a3a" stroke-width="1"/><path d="M7,0L12,5" stroke="#9a9a9a" stroke-width="1"/><path d="M5,0L12,7" stroke="#3a3a3a" stroke-width="1"/><path d="M4,0L12,8" stroke="#9a9a9a" stroke-width="1"/><path d="M2,0L12,10" stroke="#3a3a3a" stroke-width="1"/><path d="M1,0L12,11" stroke="#9a9a9a" stroke-width="1"/></svg>
<div style="left:0px;top:1014px;width:1665px;height:26px;background:#6b6b6b"></div>
<div style="left:0px;top:1013px;width:1665px;height:1px;background:#5a5a5a"></div>
<svg style="left:0px;top:1028px;" width="12" height="12" viewBox="0 0 12 12"><path d="M0,8L4,12" stroke="#3a3a3a" stroke-width="1"/><path d="M0,7L5,12" stroke="#9a9a9a" stroke-width="1"/><path d="M0,5L7,12" stroke="#3a3a3a" stroke-width="1"/><path d="M0,4L8,12" stroke="#9a9a9a" stroke-width="1"/><path d="M0,2L10,12" stroke="#3a3a3a" stroke-width="1"/><path d="M0,1L11,12" stroke="#9a9a9a" stroke-width="1"/></svg>
<div class="w menu" style="left:9px;top:1017px;width:30px;height:20px;border-radius:4px;"></div>
<svg style="left:13px;top:1020px;" width="14" height="14" viewBox="0 0 14 14"><circle cx="7" cy="7" r="6" fill="#f4f4f4" stroke="#555" stroke-width="0.9"/><path d="M7,7V3M7,7L10,9" stroke="#c02020" stroke-width="1.2"/></svg>
<svg style="left:28px;top:1020px;" width="8" height="14" viewBox="0 0 8 14"><path d="M4,1L7.2,5.6H0.8Z" fill="#bebebe"/><path d="M4,13L7.2,8.4H0.8Z" fill="#bebebe"/></svg>
<span class="t" style="left:51px;top:1020.0px;font-size:11.5px;color:#000;letter-spacing:-0.241px;">View</span>
<span class="t" style="left:96px;top:1020.0px;font-size:11.5px;color:#000;letter-spacing:-0.156px;">Marker</span>
<span class="t" style="left:151px;top:1020.0px;font-size:11.5px;color:#000;letter-spacing:-0.309px;">Frame</span>
<span class="t" style="left:203px;top:1020.0px;font-size:11.5px;color:#000;letter-spacing:-0.239px;">Playback</span>
<div class="w reg" style="left:262px;top:1017px;width:20px;height:20px;border-radius:4px 0px 0px 4px;"></div>
<svg style="left:264px;top:1019px;" width="16" height="16" viewBox="0 0 16 16"><circle cx="8" cy="8" r="6.3" fill="#f2f2f2" stroke="#444" stroke-width="0.9"/><path d="M8,8V1.7A6.3,6.3 0 0,1 14.3,8Z" fill="#f7a21b"/><path d="M8,8L10.5,11.5" stroke="#c02020" stroke-width="1.2"/></svg>
<div class="w reg" style="left:281px;top:1017px;width:20px;height:20px;border-radius:0px 4px 4px 0px;"></div>
<svg style="left:284px;top:1019px;" width="14" height="16" viewBox="0 0 14 16"><path d="M4,8V5.2A3,3.2 0 0,1 10,5.2V8" fill="none" stroke="#2a2a2a" stroke-width="2.6"/><path d="M4,8V5.2A3,3.2 0 0,1 10,5.2V8" fill="none" stroke="#f0f0f0" stroke-width="1.2"/><rect x="1.8" y="7.6" width="10.4" height="7" rx="0.8" fill="#f0f0f0" stroke="#2a2a2a" stroke-width="0.9"/><rect x="6.3" y="9.6" width="1.4" height="2.6" fill="#2a2a2a"/></svg>
<div class="w num" style="left:307px;top:1017px;width:116px;height:20px;border-radius:10px 0px 0px 10px;"></div>
<svg style="left:312px;top:1023.5px;" width="5" height="7" viewBox="0 0 5 7"><path d="M4.5,0.5V6.5L0.8,3.5Z" fill="#6e6e6e"/></svg>
<svg style="left:413px;top:1023.5px;" width="5" height="7" viewBox="0 0 5 7"><path d="M0.5,0.5V6.5L4.2,3.5Z" fill="#6e6e6e"/></svg>
<span class="t" style="left:322px;top:1019.5px;font-size:11.5px;color:#000;letter-spacing:-0.098px;">Start:</span>
<span class="t" style="right:1512px;top:1019.5px;font-size:11.5px;color:#000;">1</span>
<div class="w num" style="left:422px;top:1017px;width:112px;height:20px;border-radius:0px 10px 10px 0px;"></div>
<svg style="left:427px;top:1023.5px;" width="5" height="7" viewBox="0 0 5 7"><path d="M4.5,0.5V6.5L0.8,3.5Z" fill="#6e6e6e"/></svg>
<svg style="left:524px;top:1023.5px;" width="5" height="7" viewBox="0 0 5 7"><path d="M0.5,0.5V6.5L4.2,3.5Z" fill="#6e6e6e"/></svg>
<span class="t" style="left:437px;top:1019.5px;font-size:11.5px;color:#000;letter-spacing:-0.556px;">End:</span>
<span class="t" style="right:1401px;top:1019.5px;font-size:11.5px;color:#000;letter-spacing:0.406px;">250</span>
<div class="w num" style="left:540px;top:1017px;width:89px;height:20px;border-radius:10px;"></div>
<svg style="left:545px;top:1023.5px;" width="5" height="7" viewBox="0 0 5 7"><path d="M4.5,0.5V6.5L0.8,3.5Z" fill="#6e6e6e"/></svg>
<svg style="left:619px;top:1023.5px;" width="5" height="7" viewBox="0 0 5 7"><path d="M0.5,0.5V6.5L4.2,3.5Z" fill="#6e6e6e"/></svg>
<span class="t" style="right:1306px;top:1019.5px;font-size:11.5px;color:#000;">1</span>
<div class="w reg" style="left:645px;top:1017px;width:21px;height:20px;border-radius:4px 0px 0px 4px;"></div>
<svg style="left:647px;top:1019px;" width="16" height="16" viewBox="0 0 16 16"><path d="M3,2.6V13.4" stroke="#161616" stroke-width="2.8"/><path d="M3,3.2V12.8" stroke="#fff" stroke-width="1.4"/><path d="M9,3V13L3.5,8Z M14.5,3V13L9,8Z" fill="#fff" stroke="#161616" stroke-width="1.3" stroke-linejoin="round" paint-order="stroke"/></svg>
<div class="w reg" style="left:665px;top:1017px;width:21px;height:20px;"></div>
<svg style="left:667px;top:1019px;" width="16" height="16" viewBox="0 0 16 16"><path d="M8,3V13L2.5,8Z M14,3V13L8.5,8Z" fill="#fff" stroke="#161616" stroke-width="1.3" stroke-linejoin="round" paint-order="stroke"/></svg>
<div class="w reg" style="left:685px;top:1017px;width:21px;height:20px;"></div>
<svg style="left:687px;top:1019px;" width="16" height="16" viewBox="0 0 16 16"><path d="M12.5,2V14L3,8Z" fill="#fff" stroke="#161616" stroke-width="1.4" stroke-linejoin="round" paint-order="stroke"/></svg>
<div class="w reg" style="left:705px;top:1017px;width:21px;height:20px;"></div>
<svg style="left:707px;top:1019px;" width="16" height="16" viewBox="0 0 16 16"><path d="M3.5,2V14L13,8Z" fill="#fff" stroke="#161616" stroke-width="1.4" stroke-linejoin="round" paint-order="stroke"/></svg>
<div class="w reg" style="left:725px;top:1017px;width:21px;height:20px;"></div>
<svg style="left:727px;top:1019px;" width="16" height="16" viewBox="0 0 16 16"><path d="M2,3V13L7.5,8Z M8,3V13L13.5,8Z" fill="#fff" stroke="#161616" stroke-width="1.3" stroke-linejoin="round" paint-order="stroke"/></svg>
<div class="w reg" style="left:745px;top:1017px;width:20px;height:20px;border-radius:0px 4px 4px 0px;"></div>
<svg style="left:747px;top:1019px;" width="16" height="16" viewBox="0 0 16 16"><path d="M13,2.6V13.4" stroke="#161616" stroke-width="2.8"/><path d="M13,3.2V12.8" stroke="#fff" stroke-width="1.4"/><path d="M1.5,3V13L7,8Z M7,3V13L12.5,8Z" fill="#fff" stroke="#161616" stroke-width="1.3" stroke-linejoin="round" paint-order="stroke"/></svg>
<div class="w menu" style="left:770px;top:1017px;width:115px;height:20px;border-radius:4px;"></div>
<span class="t" style="left:778px;top:1020.0px;font-size:11.5px;color:#fff;letter-spacing:-0.244px;">No Sync</span>
<svg style="left:874px;top:1020px;" width="8" height="14" viewBox="0 0 8 14"><path d="M4,1L7.2,5.6H0.8Z" fill="#bebebe"/><path d="M4,13L7.2,8.4H0.8Z" fill="#bebebe"/></svg>
<div class="w reg" style="left:901px;top:1017px;width:20px;height:20px;border-radius:4px;"></div>
<svg style="left:904px;top:1020px;" width="14" height="14" viewBox="0 0 14 14"><circle cx="7" cy="7" r="4.6" fill="#e63a1a" stroke="#7a1a0a" stroke-width="0.9"/><circle cx="5.8" cy="5.8" r="1.4" fill="#ff9a7a" opacity="0.7"/></svg>
<div class="w menu" style="left:926px;top:1017px;width:35px;height:20px;border-radius:4px;"></div>
<svg style="left:931px;top:1021px;" width="12" height="12" viewBox="0 0 12 12"><path d="M6,1L11,6L6,11L1,6Z" fill="#ffc030" stroke="#5a3a00" stroke-width="0.8"/></svg>
<svg style="left:950px;top:1020px;" width="8" height="14" viewBox="0 0 8 14"><path d="M4,1L7.2,5.6H0.8Z" fill="#adadad"/><path d="M4,13L7.2,8.4H0.8Z" fill="#adadad"/></svg>
<div class="w txt" style="left:966px;top:1017px;width:131px;height:20px;border-radius:4px 0px 0px 4px;"></div>
<svg style="left:969px;top:1019px;" width="18" height="16" viewBox="0 0 18 16"><path d="M4,1V10" stroke="#222" stroke-width="3"/><path d="M4,1.5V10" stroke="#e8e060" stroke-width="1.4"/><circle cx="4" cy="11.5" r="2.6" fill="none" stroke="#222" stroke-width="2.6"/><path d="M5.5,9.5L13,3" stroke="#222" stroke-width="3"/><circle cx="4" cy="11.5" r="2.6" fill="none" stroke="#f0f0d0" stroke-width="1.2"/><path d="M5.8,9.6L13,3.2" stroke="#f0f0d0" stroke-width="1.4"/></svg>
<div class="w reg" style="left:1096px;top:1017px;width:21px;height:20px;"></div>
<svg style="left:1099px;top:1019px;" width="16" height="16" viewBox="0 0 16 16"><circle cx="4" cy="11.5" r="2.6" fill="none" stroke="#222" stroke-width="2.6"/><path d="M5.5,9.5L13,3" stroke="#222" stroke-width="3"/><circle cx="4" cy="11.5" r="2.6" fill="none" stroke="#f2f2f2" stroke-width="1.2"/><path d="M5.8,9.6L13,3.2" stroke="#f2f2f2" stroke-width="1.4"/></svg>
<div class="w reg" style="left:1116px;top:1017px;width:20px;height:20px;border-radius:0px 4px 4px 0px;"></div>
<svg style="left:1118px;top:1019px;" width="16" height="16" viewBox="0 0 16 16"><circle cx="4" cy="11.5" r="2.6" fill="none" stroke="#222" stroke-width="2.6"/><path d="M5.5,9.5L13,3" stroke="#222" stroke-width="3"/><circle cx="4" cy="11.5" r="2.6" fill="none" stroke="#f2f2f2" stroke-width="1.2"/><path d="M5.8,9.6L13,3.2" stroke="#f2f2f2" stroke-width="1.4"/><path d="M2.5,3L13,13.5M13,3L2.5,13.5" stroke="#e02828" stroke-width="1.6"/></svg>
<div style="left:1665px;top:50px;width:1px;height:990px;background:#0c0c0c"></div>
<div style="left:1666px;top:50px;width:254px;height:26px;background:#6b6b6b"></div>
<div style="left:1666px;top:76px;width:254px;height:147px;background:#7b7b7b"></div>
<div style="left:1666px;top:77px;width:194px;height:19px;background:#878787"></div>
<div style="left:1860px;top:77px;width:1px;height:128px;background:#6c6c6c"></div>
<div style="left:1861px;top:77px;width:19px;height:128px;background:rgba(0,0,0,0.03)"></div>
<div style="left:1881px;top:77px;width:1px;height:128px;background:#6c6c6c"></div>
<div style="left:1882px;top:77px;width:19px;height:128px;background:rgba(0,0,0,0.03)"></div>
<div style="left:1901px;top:77px;width:1px;height:128px;background:#6c6c6c"></div>
<div style="left:1902px;top:77px;width:19px;height:128px;background:rgba(0,0,0,0.03)"></div>
<svg style="left:1908px;top:50px;" width="12" height="12" viewBox="0 0 12 12"><path d="M8,0L12,4" stroke="#3a3a3a" stroke-width="1"/><path d="M7,0L12,5" stroke="#9a9a9a" stroke-width="1"/><path d="M5,0L12,7" stroke="#3a3a3a" stroke-width="1"/><path d="M4,0L12,8" stroke="#9a9a9a" stroke-width="1"/><path d="M2,0L12,10" stroke="#3a3a3a" stroke-width="1"/><path d="M1,0L12,11" stroke="#9a9a9a" stroke-width="1"/></svg>
<div class="w menu" style="left:1675px;top:53px;width:30px;height:20px;border-radius:4px;"></div>
<svg style="left:1679px;top:56px;" width="14" height="14" viewBox="0 0 14 14"><rect x="1" y="1" width="5" height="2" fill="#f5c15a"/><path d="M3.5,3V12M3.5,6.5H7M3.5,11.5H7" stroke="#e8e8e8" stroke-width="1"/><rect x="7" y="5.5" width="5.5" height="2" fill="#e8e8e8"/><rect x="7" y="10.5" width="5.5" height="2" fill="#e8e8e8"/></svg>
<svg style="left:1694px;top:56px;" width="8" height="14" viewBox="0 0 8 14"><path d="M4,1L7.2,5.6H0.8Z" fill="#adadad"/><path d="M4,13L7.2,8.4H0.8Z" fill="#adadad"/></svg>
<span class="t" style="left:1717px;top:56.0px;font-size:11.5px;color:#000;letter-spacing:-0.243px;">View</span>
<span class="t" style="left:1762px;top:56.0px;font-size:11.5px;color:#000;letter-spacing:-0.490px;">Search</span>
<div class="w menu" style="left:1809px;top:53px;width:120px;height:20px;border-radius:4px 0px 0px 4px;"></div>
<span class="t" style="left:1817px;top:56.0px;font-size:11.5px;color:#fff;letter-spacing:-0.372px;">All Scenes</span>
<svg style="left:1667px;top:77px;" width="120" height="130" viewBox="0 0 120 130"><path d="M26.5,14V111M12,10.5H22M31,70.5H41M31,90.5H41M31,110.5H41" stroke="#3c3c3c" stroke-width="1" fill="none"/></svg>
<svg style="left:1669.5px;top:82px;" width="10" height="10" viewBox="0 0 10 10"><circle cx="5" cy="5" r="4" fill="#e8e8e8" stroke="#2c2c2c" stroke-width="0.9"/><path d="M2.6,5H7.4" stroke="#111" stroke-width="1.1"/></svg>
<div style="left:1687.0px;top:77.5px;width:19.0px;height:19.0px;border-radius:50%;background:rgba(255,255,255,0.22);"></div>
<svg style="left:1688px;top:78px;" width="17" height="17" viewBox="0 0 14 14"><circle cx="3" cy="2.6" r="1.9" fill="#d8e86a"/><circle cx="3" cy="2.6" r="0.9" fill="#fffbd0"/><path d="M7.6,2.6a2.5,1.3 0 0,1 5,0V9.2a2.5,1.3 0 0,1 -5,0Z" fill="#3f74cc" stroke="#1c3f80" stroke-width="0.5"/><path d="M8.6,3V9.6" stroke="#cfe2ff" stroke-width="1.3"/><ellipse cx="10.1" cy="2.6" rx="2.5" ry="1.3" fill="#b4cff5"/><circle cx="5" cy="10" r="3.4" fill="#e4e4e4" stroke="#262626" stroke-width="0.8"/><circle cx="4.1" cy="9" r="1.3" fill="#fff"/></svg>
<span class="t" style="left:1707px;top:79.7px;font-size:11.5px;color:#000;letter-spacing:-0.655px;">Scene</span>
<svg style="left:1694.5px;top:102px;" width="10" height="10" viewBox="0 0 10 10"><circle cx="5" cy="5" r="4" fill="#e8e8e8" stroke="#2c2c2c" stroke-width="0.9"/><path d="M2.6,5H7.4" stroke="#111" stroke-width="1.1"/><path d="M5,2.6V7.4" stroke="#111" stroke-width="1.1"/></svg>
<svg style="left:1708px;top:99px;" width="16" height="16" viewBox="0 0 16 16"><rect x="4.5" y="4.5" width="10" height="10" fill="#e8e0b8" stroke="#444" stroke-width="0.7" transform="rotate(8 9 9)"/><rect x="1.5" y="1.5" width="10.5" height="10.5" fill="#f0f0f0" stroke="#333" stroke-width="0.8"/><rect x="3" y="3" width="7.5" height="7.5" fill="#3a58b8"/><path d="M6,9V4.5H8.5V7" stroke="#cfe0ff" stroke-width="1.2" fill="none"/><circle cx="4" cy="3.8" r="1" fill="#e8e060"/></svg>
<span class="t" style="left:1727px;top:99.7px;font-size:11.5px;color:#000;letter-spacing:-0.386px;">RenderLayers</span>
<div style="left:1805.5px;top:100px;width:1.5px;height:13px;background:#4a4a4a"></div>
<div style="left:1814.5px;top:97.5px;width:19.0px;height:19.0px;border-radius:50%;background:rgba(255,255,255,0.2);"></div>
<svg style="left:1816px;top:99px;" width="16" height="16" viewBox="0 0 16 16"><rect x="4.5" y="4.5" width="10" height="10" fill="#e8e0b8" stroke="#444" stroke-width="0.7" transform="rotate(8 9 9)"/><rect x="1.5" y="1.5" width="10.5" height="10.5" fill="#f0f0f0" stroke="#333" stroke-width="0.8"/><rect x="3" y="3" width="7.5" height="7.5" fill="#3a58b8"/><path d="M6,9V4.5H8.5V7" stroke="#cfe0ff" stroke-width="1.2" fill="none"/><circle cx="4" cy="3.8" r="1" fill="#e8e060"/></svg>
<div style="left:1707px;top:118px;width:18px;height:18px;border-radius:50%;background:rgba(255,255,255,0.28);"></div>
<svg style="left:1708px;top:119px;" width="16" height="16" viewBox="0 0 16 16"><circle cx="8" cy="8" r="6.6" fill="#4a78c8" stroke="#d8d8d8" stroke-width="1.2"/><path d="M4,5C6,3 8,4 7.5,6C7,8 5,8 4.5,10C3,9 3,6.5 4,5Z M9.5,8C11,7 13,8 12.5,10C12,12 10,13 9.5,11.5Z" fill="#4aa04a"/></svg>
<span class="t" style="left:1727px;top:119.7px;font-size:11.5px;color:#000;letter-spacing:-0.207px;">World</span>
<svg style="left:1689.5px;top:142px;" width="10" height="10" viewBox="0 0 10 10"><circle cx="5" cy="5" r="4" fill="#e8e8e8" stroke="#2c2c2c" stroke-width="0.9"/><path d="M2.6,5H7.4" stroke="#111" stroke-width="1.1"/><path d="M5,2.6V7.4" stroke="#111" stroke-width="1.1"/></svg>
<svg style="left:1708px;top:139px;" width="16" height="16" viewBox="0 0 16 16"><circle cx="5" cy="4.6" r="3" fill="#f0a040" stroke="#8a4a08" stroke-width="0.8"/><circle cx="11" cy="4.6" r="3" fill="#f0a040" stroke="#8a4a08" stroke-width="0.8"/><rect x="3" y="7.4" width="9.5" height="6" rx="1" fill="#f0a040" stroke="#8a4a08" stroke-width="0.8"/><path d="M12.5,9.4L15.4,8V13L12.5,11.6Z" fill="#f0a040" stroke="#8a4a08" stroke-width="0.7"/><circle cx="5" cy="4.6" r="1" fill="#fbe0b0"/><circle cx="11" cy="4.6" r="1" fill="#fbe0b0"/></svg>
<span class="t" style="left:1727px;top:139.7px;font-size:11.5px;color:#000;letter-spacing:-0.381px;">Camera</span>
<div style="left:1776.5px;top:140px;width:1.5px;height:13px;background:#4a4a4a"></div>
<div style="left:1785.5px;top:137.5px;width:19.0px;height:19.0px;border-radius:50%;background:rgba(255,255,255,0.22);"></div>
<svg style="left:1787px;top:139px;" width="16" height="16" viewBox="0 0 16 16"><circle cx="5" cy="4.6" r="3" fill="#c8c8c8" stroke="#7a7a7a" stroke-width="0.8"/><circle cx="11" cy="4.6" r="3" fill="#c8c8c8" stroke="#7a7a7a" stroke-width="0.8"/><rect x="3" y="7.4" width="9.5" height="6" rx="1" fill="#c8c8c8" stroke="#7a7a7a" stroke-width="0.8"/><path d="M12.5,9.4L15.4,8V13L12.5,11.6Z" fill="#c8c8c8" stroke="#7a7a7a" stroke-width="0.7"/><circle cx="5" cy="4.6" r="1" fill="#eee"/><circle cx="11" cy="4.6" r="1" fill="#eee"/></svg>
<svg style="left:1689.5px;top:162px;" width="10" height="10" viewBox="0 0 10 10"><circle cx="5" cy="5" r="4" fill="#e8e8e8" stroke="#2c2c2c" stroke-width="0.9"/><path d="M2.6,5H7.4" stroke="#111" stroke-width="1.1"/><path d="M5,2.6V7.4" stroke="#111" stroke-width="1.1"/></svg>
<div style="left:1706px;top:157px;width:20px;height:20px;border-radius:50%;background:rgba(240,150,50,0.55);"></div>
<svg style="left:1708px;top:159px;" width="16" height="16" viewBox="0 0 16 16"><path d="M2.5,3L13.5,3L8,14Z" fill="none" stroke="#8a4a08" stroke-width="2.8" stroke-linejoin="round"/><path d="M2.5,3L13.5,3L8,14Z" fill="none" stroke="#ffb04a" stroke-width="1.4" stroke-linejoin="round"/><circle cx="2.5" cy="3" r="1.4" fill="#fff"/><circle cx="13.5" cy="3" r="1.4" fill="#fff"/><circle cx="8" cy="14" r="1.4" fill="#fff"/></svg>
<span class="t" style="left:1727px;top:159.7px;font-size:11.5px;color:#fff;letter-spacing:-0.170px;">Cylinder</span>
<div style="left:1778.5px;top:160px;width:1.5px;height:13px;background:#4a4a4a"></div>
<div style="left:1787.5px;top:157.5px;width:19.0px;height:19.0px;border-radius:50%;background:rgba(255,255,255,0.22);"></div>
<svg style="left:1789px;top:159px;" width="16" height="16" viewBox="0 0 16 16"><path d="M3,3.5L13,3.5L8,13Z" fill="none" stroke="#5a5a5a" stroke-width="1.2"/><circle cx="3" cy="3.5" r="1.5" fill="#f4f4f4"/><circle cx="13" cy="3.5" r="1.5" fill="#f4f4f4"/><circle cx="8" cy="13" r="1.5" fill="#f4f4f4"/></svg>
<svg style="left:1689.5px;top:182px;" width="10" height="10" viewBox="0 0 10 10"><circle cx="5" cy="5" r="4" fill="#e8e8e8" stroke="#2c2c2c" stroke-width="0.9"/><path d="M2.6,5H7.4" stroke="#111" stroke-width="1.1"/><path d="M5,2.6V7.4" stroke="#111" stroke-width="1.1"/></svg>
<svg style="left:1708px;top:179px;" width="16" height="16" viewBox="0 0 16 16"><path d="M8,1.2A4.6,4.6 0 0,1 10.8,9.4V11H5.2V9.4A4.6,4.6 0 0,1 8,1.2Z" fill="#fbd9a0" stroke="#a05a10" stroke-width="0.9"/><rect x="5.6" y="11" width="4.8" height="3.8" fill="#f0a040" stroke="#8a4a08" stroke-width="0.7"/><path d="M5.6,12.8H10.4" stroke="#8a4a08" stroke-width="0.6"/></svg>
<span class="t" style="left:1727px;top:179.7px;font-size:11.5px;color:#000;letter-spacing:-0.259px;">Lamp</span>
<div style="left:1765.5px;top:180px;width:1.5px;height:13px;background:#4a4a4a"></div>
<svg style="left:1776px;top:179px;" width="16" height="16" viewBox="0 0 16 16"><circle cx="8" cy="8" r="2.3" fill="#c8d080"/><path d="M2,5V2H5M11,2H14V5M14,11V14H11M5,14H2V11" stroke="#a8b070" stroke-width="1.2" fill="none"/><path d="M4,4L6,6M12,4L10,6M12,12L10,10M4,12L6,10" stroke="#b8c078" stroke-width="0.9"/></svg>
<svg style="left:1864px;top:141px;" width="14" height="12" viewBox="0 0 14 12"><path d="M1,6C3.5,1.8 10.5,1.8 13,6C10.5,10.2 3.5,10.2 1,6Z" fill="#f4f4f4" stroke="#2a2a2a" stroke-width="0.9"/><circle cx="7" cy="5.8" r="2.5" fill="#3a3a3a"/><circle cx="6.3" cy="5" r="0.8" fill="#ddd"/></svg>
<svg style="left:1886px;top:140px;" width="12" height="15" viewBox="0 0 12 15"><path d="M2,1L2,12L4.8,9.4L6.8,14L8.8,13.2L6.8,8.8L10.6,8.6Z" fill="#f8f8f8" stroke="#1a1a1a" stroke-width="0.9"/></svg>
<svg style="left:1903px;top:140px;" width="14" height="14" viewBox="0 0 14 14"><rect x="1" y="3.6" width="12" height="9" rx="1" fill="#e8e8e8" stroke="#222" stroke-width="0.9"/><rect x="2.2" y="1.8" width="3.6" height="2" fill="#ddd" stroke="#222" stroke-width="0.6"/><circle cx="7.6" cy="8.4" r="3" fill="#555" stroke="#222" stroke-width="0.7"/><circle cx="7.6" cy="8.4" r="1.4" fill="#9a4a4a"/></svg>
<svg style="left:1864px;top:161px;" width="14" height="12" viewBox="0 0 14 12"><path d="M1,6C3.5,1.8 10.5,1.8 13,6C10.5,10.2 3.5,10.2 1,6Z" fill="#f4f4f4" stroke="#2a2a2a" stroke-width="0.9"/><circle cx="7" cy="5.8" r="2.5" fill="#3a3a3a"/><circle cx="6.3" cy="5" r="0.8" fill="#ddd"/></svg>
<svg style="left:1886px;top:160px;" width="12" height="15" viewBox="0 0 12 15"><path d="M2,1L2,12L4.8,9.4L6.8,14L8.8,13.2L6.8,8.8L10.6,8.6Z" fill="#f8f8f8" stroke="#1a1a1a" stroke-width="0.9"/></svg>
<svg style="left:1903px;top:160px;" width="14" height="14" viewBox="0 0 14 14"><rect x="1" y="3.6" width="12" height="9" rx="1" fill="#e8e8e8" stroke="#222" stroke-width="0.9"/><rect x="2.2" y="1.8" width="3.6" height="2" fill="#ddd" stroke="#222" stroke-width="0.6"/><circle cx="7.6" cy="8.4" r="3" fill="#555" stroke="#222" stroke-width="0.7"/><circle cx="7.6" cy="8.4" r="1.4" fill="#9a4a4a"/></svg>
<svg style="left:1864px;top:181px;" width="14" height="12" viewBox="0 0 14 12"><path d="M1,6C3.5,1.8 10.5,1.8 13,6C10.5,10.2 3.5,10.2 1,6Z" fill="#f4f4f4" stroke="#2a2a2a" stroke-width="0.9"/><circle cx="7" cy="5.8" r="2.5" fill="#3a3a3a"/><circle cx="6.3" cy="5" r="0.8" fill="#ddd"/></svg>
<svg style="left:1886px;top:180px;" width="12" height="15" viewBox="0 0 12 15"><path d="M2,1L2,12L4.8,9.4L6.8,14L8.8,13.2L6.8,8.8L10.6,8.6Z" fill="#f8f8f8" stroke="#1a1a1a" stroke-width="0.9"/></svg>
<svg style="left:1903px;top:180px;" width="14" height="14" viewBox="0 0 14 14"><rect x="1" y="3.6" width="12" height="9" rx="1" fill="#e8e8e8" stroke="#222" stroke-width="0.9"/><rect x="2.2" y="1.8" width="3.6" height="2" fill="#ddd" stroke="#222" stroke-width="0.6"/><circle cx="7.6" cy="8.4" r="3" fill="#555" stroke="#222" stroke-width="0.7"/><circle cx="7.6" cy="8.4" r="1.4" fill="#9a4a4a"/></svg>
<div style="left:1670px;top:205px;width:245px;height:13px;background:#5c5c5c;border:1px solid #505050;border-radius:6.5px;"></div>
<div style="left:1670px;top:205px;width:207px;height:13px;background:linear-gradient(#8c8c8c,#7e7e7e);border:1px solid #555;border-radius:6.5px;"></div>
<svg style="left:1666px;top:211px;" width="12" height="12" viewBox="0 0 12 12"><path d="M0,8L4,12" stroke="#3a3a3a" stroke-width="1"/><path d="M0,7L5,12" stroke="#9a9a9a" stroke-width="1"/><path d="M0,5L7,12" stroke="#3a3a3a" stroke-width="1"/><path d="M0,4L8,12" stroke="#9a9a9a" stroke-width="1"/><path d="M0,2L10,12" stroke="#3a3a3a" stroke-width="1"/><path d="M0,1L11,12" stroke="#9a9a9a" stroke-width="1"/></svg>
<div style="left:1666px;top:222px;width:254px;height:1px;background:#111"></div>
<div style="left:1666px;top:223px;width:254px;height:1px;background:#4a4a4a"></div>
<div style="left:1666px;top:224px;width:254px;height:816px;background:#727272"></div>
<div style="left:1666px;top:224px;width:254px;height:25px;background:#6b6b6b"></div>
<div style="left:1666px;top:248px;width:254px;height:1px;background:#5a5a5a"></div>
<svg style="left:1908px;top:224px;" width="12" height="12" viewBox="0 0 12 12"><path d="M8,0L12,4" stroke="#3a3a3a" stroke-width="1"/><path d="M7,0L12,5" stroke="#9a9a9a" stroke-width="1"/><path d="M5,0L12,7" stroke="#3a3a3a" stroke-width="1"/><path d="M4,0L12,8" stroke="#9a9a9a" stroke-width="1"/><path d="M2,0L12,10" stroke="#3a3a3a" stroke-width="1"/><path d="M1,0L12,11" stroke="#9a9a9a" stroke-width="1"/></svg>
<div class="w menu" style="left:1675px;top:226px;width:30px;height:20px;border-radius:4px;"></div>
<svg style="left:1679px;top:229px;" width="14" height="14" viewBox="0 0 14 14"><rect x="1" y="1.5" width="12" height="4.4" rx="2.2" fill="#e6e6e6"/><rect x="1" y="8" width="12" height="4.4" rx="2.2" fill="#e6e6e6"/><rect x="2.2" y="2.6" width="6" height="2.2" fill="#666"/><path d="M3,10.2H11" stroke="#555" stroke-width="1.2"/></svg>
<svg style="left:1694px;top:229px;" width="8" height="14" viewBox="0 0 8 14"><path d="M4,1L7.2,5.6H0.8Z" fill="#adadad"/><path d="M4,13L7.2,8.4H0.8Z" fill="#adadad"/></svg>
<div class="w rsel" style="left:1713px;top:226px;width:21px;height:20px;border-radius:4px 0px 0px 4px;border-color:#24407a;"></div>
<svg style="left:1715px;top:228px;" width="16" height="16" viewBox="0 0 16 16"><rect x="1.5" y="4.6" width="13" height="9.6" rx="1.2" fill="#d6d6d6" stroke="#1e1e1e" stroke-width="0.9"/><rect x="2.6" y="2.8" width="4.2" height="2.2" fill="#bdbdbd" stroke="#1e1e1e" stroke-width="0.7"/><rect x="2.2" y="5.4" width="11.6" height="1.8" fill="#555"/><circle cx="8.4" cy="9.8" r="3.3" fill="#3a3a3a" stroke="#111" stroke-width="0.7"/><circle cx="8.4" cy="9.8" r="1.9" fill="#c04848"/><circle cx="7.7" cy="9.1" r="0.7" fill="#ffd0d0"/><path d="M13,0.3L13.8,2.6L16,3.4L13.8,4.2L13,6.5L12.2,4.2L10,3.4L12.2,2.6Z" fill="#ffe960"/></svg>
<div class="w radio" style="left:1733px;top:226px;width:21px;height:20px;"></div>
<svg style="left:1735px;top:228px;" width="16" height="16" viewBox="0 0 16 16"><rect x="4.5" y="4.5" width="10" height="10" fill="#e8e0b8" stroke="#444" stroke-width="0.7" transform="rotate(8 9 9)"/><rect x="1.5" y="1.5" width="10.5" height="10.5" fill="#f0f0f0" stroke="#333" stroke-width="0.8"/><rect x="3" y="3" width="7.5" height="7.5" fill="#3a58b8"/><path d="M6,9V4.5H8.5V7" stroke="#cfe0ff" stroke-width="1.2" fill="none"/><circle cx="4" cy="3.8" r="1" fill="#e8e060"/></svg>
<div class="w radio" style="left:1753px;top:226px;width:21px;height:20px;"></div>
<svg style="left:1755px;top:228px;" width="16" height="16" viewBox="0 0 16 16"><circle cx="3.5" cy="3.5" r="2" fill="#d8e86a"/><path d="M8,4.2a2.4,1.3 0 0,1 4.8,0V10.5a2.4,1.3 0 0,1 -4.8,0Z" fill="#6a8fc8"/><ellipse cx="10.4" cy="4.2" rx="2.4" ry="1.3" fill="#a9c6f2"/><circle cx="5.6" cy="11" r="3" fill="#bdbdbd" stroke="#555" stroke-width="0.5"/></svg>
<div class="w radio" style="left:1773px;top:226px;width:21px;height:20px;"></div>
<svg style="left:1775px;top:228px;" width="16" height="16" viewBox="0 0 16 16"><circle cx="8" cy="8" r="6.6" fill="#4a78c8" stroke="#d8d8d8" stroke-width="1.2"/><path d="M4,5C6,3 8,4 7.5,6C7,8 5,8 4.5,10C3,9 3,6.5 4,5Z M9.5,8C11,7 13,8 12.5,10C12,12 10,13 9.5,11.5Z" fill="#4aa04a"/></svg>
<div class="w radio" style="left:1793px;top:226px;width:21px;height:20px;"></div>
<svg style="left:1795px;top:228px;" width="16" height="16" viewBox="0 0 16 16"><path d="M2,5L8,2.4L14,5V11.4L8,14.4L2,11.4Z" fill="#d89a5a" stroke="#6a3a10" stroke-width="0.7"/><path d="M8,7.6V14.4L14,11.4V5Z" fill="#a86a30"/><path d="M2,5L8,7.6L14,5L8,2.4Z" fill="#f0c088"/></svg>
<div class="w radio" style="left:1813px;top:226px;width:21px;height:20px;"></div>
<svg style="left:1815px;top:228px;" width="16" height="16" viewBox="0 0 16 16"><path d="M6.5,9.5L9.5,6.5" stroke="#d0d0d0" stroke-width="1.4"/><rect x="1.2" y="7.4" width="7.5" height="5" rx="2.5" transform="rotate(-45 5 10)" fill="none" stroke="#d0d0d0" stroke-width="1.5"/><rect x="7.2" y="3.6" width="7.5" height="5" rx="2.5" transform="rotate(-45 11 6)" fill="none" stroke="#d0d0d0" stroke-width="1.5"/></svg>
<div class="w radio" style="left:1833px;top:226px;width:21px;height:20px;"></div>
<svg style="left:1835px;top:228px;" width="16" height="16" viewBox="0 0 16 16"><path d="M2.6,13.4L9,7" stroke="#5a86c8" stroke-width="2.6" stroke-linecap="round"/><path d="M9.4,7.2A3.4,3.4 0 1,1 13.6,3L11.4,5.2L10.2,4L12.2,1.6A3.4,3.4 0 0,0 9.4,7.2Z" fill="#8ab0e8" stroke="#5a86c8" stroke-width="1"/></svg>
<div class="w radio" style="left:1853px;top:226px;width:21px;height:20px;"></div>
<svg style="left:1855px;top:228px;" width="16" height="16" viewBox="0 0 16 16"><path d="M3,3.5L13,3.5L8,13Z" fill="none" stroke="#d8d8d8" stroke-width="1.2"/><circle cx="3" cy="3.5" r="1.5" fill="#f4f4f4"/><circle cx="13" cy="3.5" r="1.5" fill="#f4f4f4"/><circle cx="8" cy="13" r="1.5" fill="#f4f4f4"/></svg>
<div class="w radio" style="left:1873px;top:226px;width:21px;height:20px;"></div>
<svg style="left:1875px;top:228px;" width="16" height="16" viewBox="0 0 16 16"><circle cx="8" cy="8" r="6.2" fill="#8a8a8a" stroke="#555" stroke-width="0.6"/><path d="M8,8V1.8A6.2,6.2 0 0,1 14.2,8Z" fill="#c8c8c8"/><path d="M8,8V14.2A6.2,6.2 0 0,1 1.8,8Z" fill="#c08080"/></svg>
<div class="w radio" style="left:1893px;top:226px;width:21px;height:20px;"></div>
<svg style="left:1895px;top:228px;" width="16" height="16" viewBox="0 0 16 16"><rect x="2" y="2" width="12" height="12" fill="#eadada"/><rect x="2" y="2" width="3" height="3" fill="#b03848"/><rect x="2" y="8" width="3" height="3" fill="#b03848"/><rect x="5" y="5" width="3" height="3" fill="#b03848"/><rect x="5" y="11" width="3" height="3" fill="#b03848"/><rect x="8" y="2" width="3" height="3" fill="#b03848"/><rect x="8" y="8" width="3" height="3" fill="#b03848"/><rect x="11" y="5" width="3" height="3" fill="#b03848"/><rect x="11" y="11" width="3" height="3" fill="#b03848"/></svg>
<div class="w radio" style="left:1913px;top:226px;width:21px;height:20px;"></div>
<svg style="left:1915px;top:228px;" width="16" height="16" viewBox="0 0 16 16"><circle cx="5" cy="8" r="2" fill="#e8d8a0"/></svg>
<svg style="left:1676px;top:259px;" width="17" height="17" viewBox="0 0 17 17"><path d="M2,15L7.5,9.5" stroke="#222" stroke-width="2.2"/><path d="M2,15L7.5,9.5" stroke="#e8e8e8" stroke-width="1"/><path d="M5.5,7.5L9.5,11.5L11,10L10.4,8.6L14.6,5.4L11.6,2.4L8.4,6.6L7,6Z" fill="#e4e4e4" stroke="#222" stroke-width="0.9"/></svg>
<svg style="left:1698px;top:258px;" width="17" height="17" viewBox="0 0 14 14"><circle cx="3" cy="2.6" r="1.9" fill="#d8e86a"/><circle cx="3" cy="2.6" r="0.9" fill="#fffbd0"/><path d="M7.6,2.6a2.5,1.3 0 0,1 5,0V9.2a2.5,1.3 0 0,1 -5,0Z" fill="#3f74cc" stroke="#1c3f80" stroke-width="0.5"/><path d="M8.6,3V9.6" stroke="#cfe2ff" stroke-width="1.3"/><ellipse cx="10.1" cy="2.6" rx="2.5" ry="1.3" fill="#b4cff5"/><circle cx="5" cy="10" r="3.4" fill="#e4e4e4" stroke="#262626" stroke-width="0.8"/><circle cx="4.1" cy="9" r="1.3" fill="#fff"/></svg>
<span class="t" style="left:1718px;top:259.8px;font-size:11.5px;color:#000;letter-spacing:-0.655px;">Scene</span>
<div style="left:1671px;top:284px;width:244px;height:1px;background:#5e5e5e"></div>
<div style="left:1671px;top:285px;width:244px;height:1px;background:#7a7a7a"></div>
<svg style="left:1679px;top:293px;" width="9" height="8" viewBox="0 0 9 8"><path d="M0.3,0.5H8.7L4.5,7.8Z" fill="#1a1a1a"/></svg>
<span class="t" style="left:1691px;top:288.5px;font-size:12.5px;color:#111;letter-spacing:0.000px;">Render</span>
<svg style="left:1898px;top:294.5px;" width="12" height="6" viewBox="0 0 12 6"><rect x="0" y="0" width="1" height="1" fill="#cfcfcf"/><rect x="0" y="1" width="1" height="1" fill="#4a4a4a" opacity="0.5"/><rect x="0" y="3" width="1" height="1" fill="#cfcfcf"/><rect x="0" y="4" width="1" height="1" fill="#4a4a4a" opacity="0.5"/><rect x="3" y="0" width="1" height="1" fill="#cfcfcf"/><rect x="3" y="1" width="1" height="1" fill="#4a4a4a" opacity="0.5"/><rect x="3" y="3" width="1" height="1" fill="#cfcfcf"/><rect x="3" y="4" width="1" height="1" fill="#4a4a4a" opacity="0.5"/><rect x="6" y="0" width="1" height="1" fill="#cfcfcf"/><rect x="6" y="1" width="1" height="1" fill="#4a4a4a" opacity="0.5"/><rect x="6" y="3" width="1" height="1" fill="#cfcfcf"/><rect x="6" y="4" width="1" height="1" fill="#4a4a4a" opacity="0.5"/><rect x="9" y="0" width="1" height="1" fill="#cfcfcf"/><rect x="9" y="1" width="1" height="1" fill="#4a4a4a" opacity="0.5"/><rect x="9" y="3" width="1" height="1" fill="#cfcfcf"/><rect x="9" y="4" width="1" height="1" fill="#4a4a4a" opacity="0.5"/></svg>
<div class="w tool" style="left:1674px;top:318px;width:79px;height:19px;border-radius:4px 0px 0px 4px;"></div>
<svg style="left:1677px;top:319px;" width="17" height="16" viewBox="0 0 17 16"><rect x="1.5" y="4.6" width="13" height="9.6" rx="1.2" fill="#d6d6d6" stroke="#1e1e1e" stroke-width="0.9"/><rect x="2.6" y="2.8" width="4.2" height="2.2" fill="#bdbdbd" stroke="#1e1e1e" stroke-width="0.7"/><rect x="2.2" y="5.4" width="11.6" height="1.8" fill="#555"/><circle cx="8.4" cy="9.8" r="3.3" fill="#3a3a3a" stroke="#111" stroke-width="0.7"/><circle cx="8.4" cy="9.8" r="1.9" fill="#c04848"/><circle cx="7.7" cy="9.1" r="0.7" fill="#ffd0d0"/><path d="M13,0.3L13.8,2.6L16,3.4L13.8,4.2L13,6.5L12.2,4.2L10,3.4L12.2,2.6Z" fill="#ffe960"/></svg>
<span class="t" style="left:1703px;top:320.0px;font-size:11.5px;color:#000;letter-spacing:-0.547px;">Render</span>
<div class="w tool" style="left:1752px;top:318px;width:80px;height:19px;"></div>
<svg style="left:1756px;top:319px;" width="16" height="16" viewBox="0 0 16 16"><rect x="2.5" y="7" width="12" height="7.5" fill="#2c2c2c" stroke="#111" stroke-width="0.6"/><path d="M2.2,6.6L13.6,2.2L14.6,4.6L3.2,9Z" fill="#2c2c2c" stroke="#111" stroke-width="0.5"/><path d="M4.6,5.8L6.2,7.4M7.6,4.6L9.2,6.2M10.6,3.4L12.2,5" stroke="#f0f0f0" stroke-width="1.5"/><rect x="3.5" y="9" width="10" height="1.2" fill="#e8e8e8"/><rect x="3.5" y="11.6" width="10" height="1.2" fill="#bbb"/><rect x="1.4" y="5.6" width="1.6" height="3.6" fill="#6a9af0"/></svg>
<span class="t" style="left:1774px;top:320.0px;font-size:11.5px;color:#000;letter-spacing:-0.018px;">Animation</span>
<div class="w tool" style="left:1831px;top:318px;width:81px;height:19px;border-radius:0px 4px 4px 0px;"></div>
<svg style="left:1835px;top:320px;" width="16" height="14" viewBox="0 0 16 14"><path d="M1,4.5H4L8,1V13L4,9.5H1Z" fill="#e8e8e8" stroke="#222" stroke-width="0.9"/><path d="M10,4A4,4 0 0,1 10,10M12,2A7,7 0 0,1 12,12" stroke="#4a78c8" stroke-width="1.2" fill="none"/></svg>
<span class="t" style="left:1865px;top:320.0px;font-size:11.5px;color:#000;letter-spacing:-0.356px;">Audio</span>
<span class="t" style="left:1681px;top:345.0px;font-size:11.5px;color:#000;letter-spacing:-0.130px;">Display:</span>
<div class="w menu" style="left:1757px;top:343px;width:136px;height:19px;border-radius:4px 0px 0px 4px;"></div>
<span class="t" style="left:1765px;top:345.0px;font-size:11.5px;color:#fff;letter-spacing:-0.201px;">Image Editor</span>
<svg style="left:1882px;top:345.5px;" width="8" height="14" viewBox="0 0 8 14"><path d="M4,1L7.2,5.6H0.8Z" fill="#bebebe"/><path d="M4,13L7.2,8.4H0.8Z" fill="#bebebe"/></svg>
<div class="w reg" style="left:1892px;top:343px;width:20px;height:19px;border-radius:0px 4px 4px 0px;"></div>
<svg style="left:1895px;top:345px;" width="14" height="15" viewBox="0 0 14 15"><path d="M2,7V4A2.6,2.6 0 0,1 7,3.4" fill="none" stroke="#2a2a2a" stroke-width="2.4"/><path d="M2,7V4A2.6,2.6 0 0,1 7,3.4" fill="none" stroke="#eee" stroke-width="1"/><rect x="3.6" y="6.6" width="9" height="6.6" fill="#f0f0f0" stroke="#2a2a2a" stroke-width="0.9"/><rect x="7.4" y="8.6" width="1.4" height="2.4" fill="#333"/></svg>
<div style="left:1671px;top:369px;width:244px;height:1px;background:#5e5e5e"></div>
<div style="left:1671px;top:370px;width:244px;height:1px;background:#7a7a7a"></div>
<svg style="left:1679px;top:378px;" width="9" height="8" viewBox="0 0 9 8"><path d="M0.3,0.5H8.7L4.5,7.8Z" fill="#1a1a1a"/></svg>
<span class="t" style="left:1691px;top:373.5px;font-size:12.5px;color:#111;letter-spacing:0.077px;">Dimensions</span>
<svg style="left:1898px;top:379.5px;" width="12" height="6" viewBox="0 0 12 6"><rect x="0" y="0" width="1" height="1" fill="#cfcfcf"/><rect x="0" y="1" width="1" height="1" fill="#4a4a4a" opacity="0.5"/><rect x="0" y="3" width="1" height="1" fill="#cfcfcf"/><rect x="0" y="4" width="1" height="1" fill="#4a4a4a" opacity="0.5"/><rect x="3" y="0" width="1" height="1" fill="#cfcfcf"/><rect x="3" y="1" width="1" height="1" fill="#4a4a4a" opacity="0.5"/><rect x="3" y="3" width="1" height="1" fill="#cfcfcf"/><rect x="3" y="4" width="1" height="1" fill="#4a4a4a" opacity="0.5"/><rect x="6" y="0" width="1" height="1" fill="#cfcfcf"/><rect x="6" y="1" width="1" height="1" fill="#4a4a4a" opacity="0.5"/><rect x="6" y="3" width="1" height="1" fill="#cfcfcf"/><rect x="6" y="4" width="1" height="1" fill="#4a4a4a" opacity="0.5"/><rect x="9" y="0" width="1" height="1" fill="#cfcfcf"/><rect x="9" y="1" width="1" height="1" fill="#4a4a4a" opacity="0.5"/><rect x="9" y="3" width="1" height="1" fill="#cfcfcf"/><rect x="9" y="4" width="1" height="1" fill="#4a4a4a" opacity="0.5"/></svg>
<div class="w menu" style="left:1674px;top:403px;width:198px;height:19px;border-radius:4px 0px 0px 4px;"></div>
<span class="t" style="left:1681px;top:405.0px;font-size:11.5px;color:#fff;letter-spacing:-0.454px;">Render Presets</span>
<svg style="left:1861px;top:405.5px;" width="8" height="14" viewBox="0 0 8 14"><path d="M4,1L7.2,5.6H0.8Z" fill="#bebebe"/><path d="M4,13L7.2,8.4H0.8Z" fill="#bebebe"/></svg>
<div class="w tool" style="left:1871px;top:403px;width:21px;height:19px;"></div>
<svg style="left:1875px;top:406px;" width="13" height="13" viewBox="0 0 13 13"><path d="M6.5,0.8V12.2M0.8,6.5H12.2" stroke="#1a1a1a" stroke-width="4"/><path d="M6.5,1.8V11.2M1.8,6.5H11.2" stroke="#f4f4f4" stroke-width="2"/></svg>
<div class="w tool" style="left:1891px;top:403px;width:21px;height:19px;border-radius:0px 4px 4px 0px;"></div>
<svg style="left:1895px;top:406px;" width="13" height="13" viewBox="0 0 13 13"><path d="M0.8,6.5H12.2" stroke="#1a1a1a" stroke-width="4"/><path d="M1.8,6.5H11.2" stroke="#f4f4f4" stroke-width="2"/></svg>
<span class="t" style="left:1681px;top:429.5px;font-size:11.5px;color:#000;letter-spacing:-0.254px;">Resolution:</span>
<span class="t" style="left:1805px;top:429.5px;font-size:11.5px;color:#000;letter-spacing:-0.410px;">Frame Range:</span>
<div class="w num" style="left:1674px;top:447px;width:115px;height:20px;border-radius:10px 10px 0px 0px;"></div>
<svg style="left:1679px;top:453.5px;" width="5" height="7" viewBox="0 0 5 7"><path d="M4.5,0.5V6.5L0.8,3.5Z" fill="#6e6e6e"/></svg>
<svg style="left:1779px;top:453.5px;" width="5" height="7" viewBox="0 0 5 7"><path d="M0.5,0.5V6.5L4.2,3.5Z" fill="#6e6e6e"/></svg>
<span class="t" style="left:1690px;top:449.5px;font-size:11.5px;color:#000;letter-spacing:-0.875px;">X:</span>
<span class="t" style="right:148px;top:449.5px;font-size:11.5px;color:#000;letter-spacing:0.178px;">1920 px</span>
<div class="w num" style="left:1674px;top:466px;width:115px;height:21px;"></div>
<svg style="left:1679px;top:473.0px;" width="5" height="7" viewBox="0 0 5 7"><path d="M4.5,0.5V6.5L0.8,3.5Z" fill="#6e6e6e"/></svg>
<svg style="left:1779px;top:473.0px;" width="5" height="7" viewBox="0 0 5 7"><path d="M0.5,0.5V6.5L4.2,3.5Z" fill="#6e6e6e"/></svg>
<span class="t" style="left:1690px;top:469.0px;font-size:11.5px;color:#000;letter-spacing:-0.234px;">Y:</span>
<span class="t" style="right:148px;top:469.0px;font-size:11.5px;color:#000;letter-spacing:0.178px;">1080 px</span>
<div class="w num" style="left:1674px;top:486px;width:115px;height:20px;border-radius:0px 0px 10px 10px;background:linear-gradient(90deg,#7c7c7c 0,#7c7c7c 52%,transparent 52%),linear-gradient(#a0a0a0,#b6b6b6);"></div>
<span class="t" style="right:148px;top:488.5px;font-size:11.5px;color:#000;letter-spacing:0.484px;">50%</span>
<div class="w num" style="left:1797px;top:447px;width:115px;height:20px;border-radius:10px 10px 0px 0px;"></div>
<svg style="left:1802px;top:453.5px;" width="5" height="7" viewBox="0 0 5 7"><path d="M4.5,0.5V6.5L0.8,3.5Z" fill="#6e6e6e"/></svg>
<svg style="left:1902px;top:453.5px;" width="5" height="7" viewBox="0 0 5 7"><path d="M0.5,0.5V6.5L4.2,3.5Z" fill="#6e6e6e"/></svg>
<span class="t" style="left:1813px;top:449.5px;font-size:11.5px;color:#000;letter-spacing:-0.173px;">Start Frame:</span>
<span class="t" style="right:25px;top:449.5px;font-size:11.5px;color:#000;">1</span>
<div class="w num" style="left:1797px;top:466px;width:115px;height:21px;"></div>
<svg style="left:1802px;top:473.0px;" width="5" height="7" viewBox="0 0 5 7"><path d="M4.5,0.5V6.5L0.8,3.5Z" fill="#6e6e6e"/></svg>
<svg style="left:1902px;top:473.0px;" width="5" height="7" viewBox="0 0 5 7"><path d="M0.5,0.5V6.5L4.2,3.5Z" fill="#6e6e6e"/></svg>
<span class="t" style="left:1813px;top:469.0px;font-size:11.5px;color:#000;letter-spacing:-0.455px;">End Frame:</span>
<span class="t" style="right:25px;top:469.0px;font-size:11.5px;color:#000;letter-spacing:0.406px;">250</span>
<div class="w num" style="left:1797px;top:486px;width:115px;height:20px;border-radius:0px 0px 10px 10px;"></div>
<svg style="left:1802px;top:492.5px;" width="5" height="7" viewBox="0 0 5 7"><path d="M4.5,0.5V6.5L0.8,3.5Z" fill="#6e6e6e"/></svg>
<svg style="left:1902px;top:492.5px;" width="5" height="7" viewBox="0 0 5 7"><path d="M0.5,0.5V6.5L4.2,3.5Z" fill="#6e6e6e"/></svg>
<span class="t" style="left:1813px;top:488.5px;font-size:11.5px;color:#000;letter-spacing:-0.328px;">Frame Step:</span>
<span class="t" style="right:25px;top:488.5px;font-size:11.5px;color:#000;">1</span>
<span class="t" style="left:1681px;top:509.5px;font-size:11.5px;color:#000;letter-spacing:-0.200px;">Aspect Ratio:</span>
<span class="t" style="left:1805px;top:509.5px;font-size:11.5px;color:#000;letter-spacing:-0.392px;">Frame Rate:</span>
<div class="w num" style="left:1674px;top:527px;width:115px;height:20px;border-radius:10px 10px 0px 0px;"></div>
<svg style="left:1679px;top:533.5px;" width="5" height="7" viewBox="0 0 5 7"><path d="M4.5,0.5V6.5L0.8,3.5Z" fill="#6e6e6e"/></svg>
<svg style="left:1779px;top:533.5px;" width="5" height="7" viewBox="0 0 5 7"><path d="M0.5,0.5V6.5L4.2,3.5Z" fill="#6e6e6e"/></svg>
<span class="t" style="left:1690px;top:529.5px;font-size:11.5px;color:#000;letter-spacing:-0.875px;">X:</span>
<span class="t" style="right:148px;top:529.5px;font-size:11.5px;color:#000;letter-spacing:0.303px;">1.000</span>
<div class="w num" style="left:1674px;top:546px;width:115px;height:21px;border-radius:0px 0px 10px 10px;"></div>
<svg style="left:1679px;top:553.0px;" width="5" height="7" viewBox="0 0 5 7"><path d="M4.5,0.5V6.5L0.8,3.5Z" fill="#6e6e6e"/></svg>
<svg style="left:1779px;top:553.0px;" width="5" height="7" viewBox="0 0 5 7"><path d="M0.5,0.5V6.5L4.2,3.5Z" fill="#6e6e6e"/></svg>
<span class="t" style="left:1690px;top:549.0px;font-size:11.5px;color:#000;letter-spacing:-0.234px;">Y:</span>
<span class="t" style="right:148px;top:549.0px;font-size:11.5px;color:#000;letter-spacing:0.303px;">1.000</span>
<div class="w menu" style="left:1797px;top:528px;width:115px;height:19px;border-radius:4px;"></div>
<span class="t" style="left:1805px;top:530.0px;font-size:11.5px;color:#fff;letter-spacing:-0.066px;">24 fps</span>
<svg style="left:1901px;top:530.5px;" width="8" height="14" viewBox="0 0 8 14"><path d="M4,1L7.2,5.6H0.8Z" fill="#bebebe"/><path d="M4,13L7.2,8.4H0.8Z" fill="#bebebe"/></svg>
<span class="t" style="left:1805px;top:549.5px;font-size:11.5px;color:#000;letter-spacing:-0.238px;">Time Remapping:</span>
<div class="w num" style="left:1797px;top:568px;width:57px;height:19px;border-radius:10px 0px 0px 10px;"></div>
<svg style="left:1802px;top:574.0px;" width="5" height="7" viewBox="0 0 5 7"><path d="M4.5,0.5V6.5L0.8,3.5Z" fill="#6e6e6e"/></svg>
<svg style="left:1844px;top:574.0px;" width="5" height="7" viewBox="0 0 5 7"><path d="M0.5,0.5V6.5L4.2,3.5Z" fill="#6e6e6e"/></svg>
<span class="t" style="right:81px;top:570.0px;font-size:11.5px;color:#000;letter-spacing:0.536px;">:100</span>
<div class="w num" style="left:1853px;top:568px;width:59px;height:19px;border-radius:0px 10px 10px 0px;"></div>
<svg style="left:1858px;top:574.0px;" width="5" height="7" viewBox="0 0 5 7"><path d="M4.5,0.5V6.5L0.8,3.5Z" fill="#6e6e6e"/></svg>
<svg style="left:1902px;top:574.0px;" width="5" height="7" viewBox="0 0 5 7"><path d="M0.5,0.5V6.5L4.2,3.5Z" fill="#6e6e6e"/></svg>
<span class="t" style="right:23px;top:570.0px;font-size:11.5px;color:#000;letter-spacing:0.105px;">: 100</span>
<div class="w opt" style="left:1677px;top:572px;width:14px;height:14px;border-radius:3px;"></div>
<span class="t" style="left:1699px;top:572.0px;font-size:11.5px;color:#000;letter-spacing:-0.433px;">Bord</span>
<div class="w opt" style="left:1738px;top:572px;width:14px;height:14px;border-radius:3px;opacity:0.45;"></div>
<span class="t" style="left:1760px;top:572.0px;font-size:11.5px;color:#4a4a4a;letter-spacing:-0.645px;">Crop</span>
<div style="left:1671px;top:596px;width:244px;height:1px;background:#5e5e5e"></div>
<div style="left:1671px;top:597px;width:244px;height:1px;background:#7a7a7a"></div>
<svg style="left:1679px;top:605px;" width="9" height="8" viewBox="0 0 9 8"><path d="M0.3,0.5H8.7L4.5,7.8Z" fill="#1a1a1a"/></svg>
<div class="w opt" style="left:1691px;top:602px;width:14px;height:14px;border-radius:3px;"></div>
<svg style="left:1692px;top:600px;" width="14" height="14" viewBox="0 0 14 14"><path d="M2.6,7.6L5.6,11.4L11.4,2.6" stroke="#f4f4f4" stroke-width="1.7" fill="none" stroke-linecap="round" stroke-linejoin="round"/></svg>
<span class="t" style="left:1711px;top:600.5px;font-size:12.5px;color:#111;letter-spacing:0.043px;">Anti-Aliasing</span>
<svg style="left:1898px;top:606.5px;" width="12" height="6" viewBox="0 0 12 6"><rect x="0" y="0" width="1" height="1" fill="#cfcfcf"/><rect x="0" y="1" width="1" height="1" fill="#4a4a4a" opacity="0.5"/><rect x="0" y="3" width="1" height="1" fill="#cfcfcf"/><rect x="0" y="4" width="1" height="1" fill="#4a4a4a" opacity="0.5"/><rect x="3" y="0" width="1" height="1" fill="#cfcfcf"/><rect x="3" y="1" width="1" height="1" fill="#4a4a4a" opacity="0.5"/><rect x="3" y="3" width="1" height="1" fill="#cfcfcf"/><rect x="3" y="4" width="1" height="1" fill="#4a4a4a" opacity="0.5"/><rect x="6" y="0" width="1" height="1" fill="#cfcfcf"/><rect x="6" y="1" width="1" height="1" fill="#4a4a4a" opacity="0.5"/><rect x="6" y="3" width="1" height="1" fill="#cfcfcf"/><rect x="6" y="4" width="1" height="1" fill="#4a4a4a" opacity="0.5"/><rect x="9" y="0" width="1" height="1" fill="#cfcfcf"/><rect x="9" y="1" width="1" height="1" fill="#4a4a4a" opacity="0.5"/><rect x="9" y="3" width="1" height="1" fill="#cfcfcf"/><rect x="9" y="4" width="1" height="1" fill="#4a4a4a" opacity="0.5"/></svg>
<div class="w radio" style="left:1674px;top:629px;width:29px;height:20px;border-radius:4px 0px 0px 4px;"></div>
<span class="t" style="left:1687.7px;transform:translateX(-50%);top:631.5px;font-size:11.5px;color:#fff;">5</span>
<div class="w rsel" style="left:1702px;top:629px;width:29px;height:20px;"></div>
<span class="t" style="left:1715.7px;transform:translateX(-50%);top:631.5px;font-size:11.5px;color:#000;">8</span>
<div class="w radio" style="left:1730px;top:629px;width:29px;height:20px;"></div>
<span class="t" style="left:1743.7px;transform:translateX(-50%);top:631.5px;font-size:11.5px;color:#fff;">11</span>
<div class="w radio" style="left:1758px;top:629px;width:31px;height:20px;border-radius:0px 4px 4px 0px;"></div>
<span class="t" style="left:1773.2px;transform:translateX(-50%);top:631.5px;font-size:11.5px;color:#fff;">16</span>
<div class="w menu" style="left:1797px;top:629px;width:115px;height:20px;border-radius:4px;"></div>
<span class="t" style="left:1805px;top:631.5px;font-size:11.5px;color:#fff;letter-spacing:0.047px;">Mitchell-Netravali</span>
<svg style="left:1901px;top:632px;" width="8" height="14" viewBox="0 0 8 14"><path d="M4,1L7.2,5.6H0.8Z" fill="#bebebe"/><path d="M4,13L7.2,8.4H0.8Z" fill="#bebebe"/></svg>
<div class="w opt" style="left:1677px;top:655px;width:14px;height:14px;border-radius:3px;"></div>
<span class="t" style="left:1699px;top:653.5px;font-size:11.5px;color:#000;letter-spacing:-0.273px;">Full Sample</span>
<div class="w num" style="left:1797px;top:652px;width:115px;height:19px;border-radius:10px;"></div>
<svg style="left:1802px;top:658.0px;" width="5" height="7" viewBox="0 0 5 7"><path d="M4.5,0.5V6.5L0.8,3.5Z" fill="#6e6e6e"/></svg>
<svg style="left:1902px;top:658.0px;" width="5" height="7" viewBox="0 0 5 7"><path d="M0.5,0.5V6.5L4.2,3.5Z" fill="#6e6e6e"/></svg>
<span class="t" style="left:1813px;top:654.0px;font-size:11.5px;color:#000;letter-spacing:-0.642px;">Size:</span>
<span class="t" style="right:25px;top:654.0px;font-size:11.5px;color:#000;letter-spacing:0.268px;">1.000 px</span>
<div style="left:1671px;top:679px;width:244px;height:1px;background:#5e5e5e"></div>
<div style="left:1671px;top:680px;width:244px;height:1px;background:#7a7a7a"></div>
<svg style="left:1679px;top:686.5px;" width="8" height="9" viewBox="0 0 8 9"><path d="M0.5,0.3V8.7L7.8,4.5Z" fill="#1a1a1a"/></svg>
<div class="w opt" style="left:1691px;top:684px;width:14px;height:14px;border-radius:3px;"></div>
<span class="t" style="left:1711px;top:682.5px;font-size:12.5px;color:#111;letter-spacing:-0.002px;">Sampled Motion Blur</span>
<svg style="left:1898px;top:688.5px;" width="12" height="6" viewBox="0 0 12 6"><rect x="0" y="0" width="1" height="1" fill="#cfcfcf"/><rect x="0" y="1" width="1" height="1" fill="#4a4a4a" opacity="0.5"/><rect x="0" y="3" width="1" height="1" fill="#cfcfcf"/><rect x="0" y="4" width="1" height="1" fill="#4a4a4a" opacity="0.5"/><rect x="3" y="0" width="1" height="1" fill="#cfcfcf"/><rect x="3" y="1" width="1" height="1" fill="#4a4a4a" opacity="0.5"/><rect x="3" y="3" width="1" height="1" fill="#cfcfcf"/><rect x="3" y="4" width="1" height="1" fill="#4a4a4a" opacity="0.5"/><rect x="6" y="0" width="1" height="1" fill="#cfcfcf"/><rect x="6" y="1" width="1" height="1" fill="#4a4a4a" opacity="0.5"/><rect x="6" y="3" width="1" height="1" fill="#cfcfcf"/><rect x="6" y="4" width="1" height="1" fill="#4a4a4a" opacity="0.5"/><rect x="9" y="0" width="1" height="1" fill="#cfcfcf"/><rect x="9" y="1" width="1" height="1" fill="#4a4a4a" opacity="0.5"/><rect x="9" y="3" width="1" height="1" fill="#cfcfcf"/><rect x="9" y="4" width="1" height="1" fill="#4a4a4a" opacity="0.5"/></svg>
<div style="left:1671px;top:702px;width:244px;height:1px;background:#5e5e5e"></div>
<div style="left:1671px;top:703px;width:244px;height:1px;background:#7a7a7a"></div>
<svg style="left:1679px;top:710.5px;" width="8" height="9" viewBox="0 0 8 9"><path d="M0.5,0.3V8.7L7.8,4.5Z" fill="#1a1a1a"/></svg>
<span class="t" style="left:1691px;top:706.5px;font-size:12.5px;color:#111;letter-spacing:-0.147px;">Shading</span>
<svg style="left:1898px;top:712.5px;" width="12" height="6" viewBox="0 0 12 6"><rect x="0" y="0" width="1" height="1" fill="#cfcfcf"/><rect x="0" y="1" width="1" height="1" fill="#4a4a4a" opacity="0.5"/><rect x="0" y="3" width="1" height="1" fill="#cfcfcf"/><rect x="0" y="4" width="1" height="1" fill="#4a4a4a" opacity="0.5"/><rect x="3" y="0" width="1" height="1" fill="#cfcfcf"/><rect x="3" y="1" width="1" height="1" fill="#4a4a4a" opacity="0.5"/><rect x="3" y="3" width="1" height="1" fill="#cfcfcf"/><rect x="3" y="4" width="1" height="1" fill="#4a4a4a" opacity="0.5"/><rect x="6" y="0" width="1" height="1" fill="#cfcfcf"/><rect x="6" y="1" width="1" height="1" fill="#4a4a4a" opacity="0.5"/><rect x="6" y="3" width="1" height="1" fill="#cfcfcf"/><rect x="6" y="4" width="1" height="1" fill="#4a4a4a" opacity="0.5"/><rect x="9" y="0" width="1" height="1" fill="#cfcfcf"/><rect x="9" y="1" width="1" height="1" fill="#4a4a4a" opacity="0.5"/><rect x="9" y="3" width="1" height="1" fill="#cfcfcf"/><rect x="9" y="4" width="1" height="1" fill="#4a4a4a" opacity="0.5"/></svg>
<div style="left:1671px;top:726px;width:244px;height:1px;background:#5e5e5e"></div>
<div style="left:1671px;top:727px;width:244px;height:1px;background:#7a7a7a"></div>
<svg style="left:1679px;top:734.5px;" width="8" height="9" viewBox="0 0 8 9"><path d="M0.5,0.3V8.7L7.8,4.5Z" fill="#1a1a1a"/></svg>
<span class="t" style="left:1691px;top:730.5px;font-size:12.5px;color:#111;letter-spacing:-0.057px;">Performance</span>
<svg style="left:1898px;top:736.5px;" width="12" height="6" viewBox="0 0 12 6"><rect x="0" y="0" width="1" height="1" fill="#cfcfcf"/><rect x="0" y="1" width="1" height="1" fill="#4a4a4a" opacity="0.5"/><rect x="0" y="3" width="1" height="1" fill="#cfcfcf"/><rect x="0" y="4" width="1" height="1" fill="#4a4a4a" opacity="0.5"/><rect x="3" y="0" width="1" height="1" fill="#cfcfcf"/><rect x="3" y="1" width="1" height="1" fill="#4a4a4a" opacity="0.5"/><rect x="3" y="3" width="1" height="1" fill="#cfcfcf"/><rect x="3" y="4" width="1" height="1" fill="#4a4a4a" opacity="0.5"/><rect x="6" y="0" width="1" height="1" fill="#cfcfcf"/><rect x="6" y="1" width="1" height="1" fill="#4a4a4a" opacity="0.5"/><rect x="6" y="3" width="1" height="1" fill="#cfcfcf"/><rect x="6" y="4" width="1" height="1" fill="#4a4a4a" opacity="0.5"/><rect x="9" y="0" width="1" height="1" fill="#cfcfcf"/><rect x="9" y="1" width="1" height="1" fill="#4a4a4a" opacity="0.5"/><rect x="9" y="3" width="1" height="1" fill="#cfcfcf"/><rect x="9" y="4" width="1" height="1" fill="#4a4a4a" opacity="0.5"/></svg>
<div style="left:1671px;top:750px;width:244px;height:1px;background:#5e5e5e"></div>
<div style="left:1671px;top:751px;width:244px;height:1px;background:#7a7a7a"></div>
<svg style="left:1679px;top:758.5px;" width="8" height="9" viewBox="0 0 8 9"><path d="M0.5,0.3V8.7L7.8,4.5Z" fill="#1a1a1a"/></svg>
<span class="t" style="left:1691px;top:754.5px;font-size:12.5px;color:#111;letter-spacing:-0.237px;">Post Processing</span>
<svg style="left:1898px;top:760.5px;" width="12" height="6" viewBox="0 0 12 6"><rect x="0" y="0" width="1" height="1" fill="#cfcfcf"/><rect x="0" y="1" width="1" height="1" fill="#4a4a4a" opacity="0.5"/><rect x="0" y="3" width="1" height="1" fill="#cfcfcf"/><rect x="0" y="4" width="1" height="1" fill="#4a4a4a" opacity="0.5"/><rect x="3" y="0" width="1" height="1" fill="#cfcfcf"/><rect x="3" y="1" width="1" height="1" fill="#4a4a4a" opacity="0.5"/><rect x="3" y="3" width="1" height="1" fill="#cfcfcf"/><rect x="3" y="4" width="1" height="1" fill="#4a4a4a" opacity="0.5"/><rect x="6" y="0" width="1" height="1" fill="#cfcfcf"/><rect x="6" y="1" width="1" height="1" fill="#4a4a4a" opacity="0.5"/><rect x="6" y="3" width="1" height="1" fill="#cfcfcf"/><rect x="6" y="4" width="1" height="1" fill="#4a4a4a" opacity="0.5"/><rect x="9" y="0" width="1" height="1" fill="#cfcfcf"/><rect x="9" y="1" width="1" height="1" fill="#4a4a4a" opacity="0.5"/><rect x="9" y="3" width="1" height="1" fill="#cfcfcf"/><rect x="9" y="4" width="1" height="1" fill="#4a4a4a" opacity="0.5"/></svg>
<div style="left:1671px;top:774px;width:244px;height:1px;background:#5e5e5e"></div>
<div style="left:1671px;top:775px;width:244px;height:1px;background:#7a7a7a"></div>
<svg style="left:1679px;top:782.5px;" width="8" height="9" viewBox="0 0 8 9"><path d="M0.5,0.3V8.7L7.8,4.5Z" fill="#1a1a1a"/></svg>
<span class="t" style="left:1691px;top:778.5px;font-size:12.5px;color:#111;letter-spacing:-0.018px;">Metadata</span>
<svg style="left:1898px;top:784.5px;" width="12" height="6" viewBox="0 0 12 6"><rect x="0" y="0" width="1" height="1" fill="#cfcfcf"/><rect x="0" y="1" width="1" height="1" fill="#4a4a4a" opacity="0.5"/><rect x="0" y="3" width="1" height="1" fill="#cfcfcf"/><rect x="0" y="4" width="1" height="1" fill="#4a4a4a" opacity="0.5"/><rect x="3" y="0" width="1" height="1" fill="#cfcfcf"/><rect x="3" y="1" width="1" height="1" fill="#4a4a4a" opacity="0.5"/><rect x="3" y="3" width="1" height="1" fill="#cfcfcf"/><rect x="3" y="4" width="1" height="1" fill="#4a4a4a" opacity="0.5"/><rect x="6" y="0" width="1" height="1" fill="#cfcfcf"/><rect x="6" y="1" width="1" height="1" fill="#4a4a4a" opacity="0.5"/><rect x="6" y="3" width="1" height="1" fill="#cfcfcf"/><rect x="6" y="4" width="1" height="1" fill="#4a4a4a" opacity="0.5"/><rect x="9" y="0" width="1" height="1" fill="#cfcfcf"/><rect x="9" y="1" width="1" height="1" fill="#4a4a4a" opacity="0.5"/><rect x="9" y="3" width="1" height="1" fill="#cfcfcf"/><rect x="9" y="4" width="1" height="1" fill="#4a4a4a" opacity="0.5"/></svg>
<div style="left:1671px;top:798px;width:244px;height:1px;background:#5e5e5e"></div>
<div style="left:1671px;top:799px;width:244px;height:1px;background:#7a7a7a"></div>
<svg style="left:1679px;top:807px;" width="9" height="8" viewBox="0 0 9 8"><path d="M0.3,0.5H8.7L4.5,7.8Z" fill="#1a1a1a"/></svg>
<span class="t" style="left:1691px;top:802.5px;font-size:12.5px;color:#111;letter-spacing:0.094px;">Output</span>
<svg style="left:1898px;top:808.5px;" width="12" height="6" viewBox="0 0 12 6"><rect x="0" y="0" width="1" height="1" fill="#cfcfcf"/><rect x="0" y="1" width="1" height="1" fill="#4a4a4a" opacity="0.5"/><rect x="0" y="3" width="1" height="1" fill="#cfcfcf"/><rect x="0" y="4" width="1" height="1" fill="#4a4a4a" opacity="0.5"/><rect x="3" y="0" width="1" height="1" fill="#cfcfcf"/><rect x="3" y="1" width="1" height="1" fill="#4a4a4a" opacity="0.5"/><rect x="3" y="3" width="1" height="1" fill="#cfcfcf"/><rect x="3" y="4" width="1" height="1" fill="#4a4a4a" opacity="0.5"/><rect x="6" y="0" width="1" height="1" fill="#cfcfcf"/><rect x="6" y="1" width="1" height="1" fill="#4a4a4a" opacity="0.5"/><rect x="6" y="3" width="1" height="1" fill="#cfcfcf"/><rect x="6" y="4" width="1" height="1" fill="#4a4a4a" opacity="0.5"/><rect x="9" y="0" width="1" height="1" fill="#cfcfcf"/><rect x="9" y="1" width="1" height="1" fill="#4a4a4a" opacity="0.5"/><rect x="9" y="3" width="1" height="1" fill="#cfcfcf"/><rect x="9" y="4" width="1" height="1" fill="#4a4a4a" opacity="0.5"/></svg>
<div class="w txt" style="left:1674px;top:832px;width:218px;height:19px;border-radius:4px 0px 0px 4px;"></div>
<span class="t" style="left:1681px;top:834.0px;font-size:11.5px;color:#000;letter-spacing:0.109px;">/tmp\</span>
<div class="w reg" style="left:1891px;top:832px;width:21px;height:19px;border-radius:0px 4px 4px 0px;"></div>
<svg style="left:1894px;top:834px;" width="15" height="15" viewBox="0 0 15 15"><path d="M1.5,4.5H6L7,6H13.5V13.5H1.5Z" fill="#e8d890" stroke="#5a5020" stroke-width="0.9"/><rect x="3.5" y="2" width="8" height="4" fill="#f4f4f4" stroke="#555" stroke-width="0.6"/><path d="M1.5,7.5H13.5" stroke="#b0a050" stroke-width="0.8"/></svg>
<div class="w opt" style="left:1677px;top:860px;width:14px;height:14px;border-radius:3px;"></div>
<svg style="left:1678px;top:858px;" width="14" height="14" viewBox="0 0 14 14"><path d="M2.6,7.6L5.6,11.4L11.4,2.6" stroke="#f4f4f4" stroke-width="1.7" fill="none" stroke-linecap="round" stroke-linejoin="round"/></svg>
<span class="t" style="left:1699px;top:858.5px;font-size:11.5px;color:#fff;letter-spacing:0.099px;">Overwrite</span>
<div class="w opt" style="left:1800px;top:860px;width:14px;height:14px;border-radius:3px;"></div>
<svg style="left:1801px;top:858px;" width="14" height="14" viewBox="0 0 14 14"><path d="M2.6,7.6L5.6,11.4L11.4,2.6" stroke="#f4f4f4" stroke-width="1.7" fill="none" stroke-linecap="round" stroke-linejoin="round"/></svg>
<span class="t" style="left:1822px;top:858.5px;font-size:11.5px;color:#fff;letter-spacing:-0.285px;">File Extensions</span>
<div class="w opt" style="left:1677px;top:882px;width:14px;height:14px;border-radius:3px;"></div>
<span class="t" style="left:1699px;top:880.5px;font-size:11.5px;color:#000;letter-spacing:-0.317px;">Placeholders</span>
<div class="w opt" style="left:1800px;top:882px;width:14px;height:14px;border-radius:3px;"></div>
<span class="t" style="left:1822px;top:880.5px;font-size:11.5px;color:#000;letter-spacing:-0.367px;">Cache Result</span>
<div class="w menu" style="left:1674px;top:904px;width:115px;height:19px;border-radius:4px;"></div>
<svg style="left:1678px;top:906px;" width="14" height="15" viewBox="0 0 14 15"><path d="M1.5,1H9L12.5,4.5V14H1.5Z" fill="#f0f0f0" stroke="#333" stroke-width="0.8"/><rect x="2.6" y="5" width="8.8" height="4" fill="#c86a8a"/><rect x="2.6" y="9" width="8.8" height="3.6" fill="#5a7ac8"/></svg>
<span class="t" style="left:1697px;top:906.0px;font-size:11.5px;color:#fff;letter-spacing:-1.468px;">PNG</span>
<svg style="left:1778px;top:906.5px;" width="8" height="14" viewBox="0 0 8 14"><path d="M4,1L7.2,5.6H0.8Z" fill="#bebebe"/><path d="M4,13L7.2,8.4H0.8Z" fill="#bebebe"/></svg>
<div class="w radio" style="left:1797px;top:904px;width:39px;height:19px;border-radius:4px 0px 0px 4px;"></div>
<span class="t" style="left:1816.5px;transform:translateX(-50%);top:906.0px;font-size:11.5px;color:#fff;letter-spacing:-0.531px;">BW</span>
<div class="w radio" style="left:1835px;top:904px;width:39px;height:19px;"></div>
<span class="t" style="left:1854.5px;transform:translateX(-50%);top:906.0px;font-size:11.5px;color:#fff;letter-spacing:-1.468px;">RGB</span>
<div class="w rsel" style="left:1873px;top:904px;width:39px;height:19px;border-radius:0px 4px 4px 0px;"></div>
<span class="t" style="left:1893.0px;transform:translateX(-50%);top:906.0px;font-size:11.5px;color:#000;letter-spacing:-1.202px;">RGBA</span>
<span class="t" style="left:1681px;top:928.0px;font-size:11.5px;color:#000;letter-spacing:-0.233px;">Color Depth:</span>
<div class="w rsel" style="left:1758px;top:926px;width:78px;height:19px;border-radius:4px 0px 0px 4px;"></div>
<span class="t" style="left:1796.5px;transform:translateX(-50%);top:928.0px;font-size:11.5px;color:#000;">8</span>
<div class="w radio" style="left:1835px;top:926px;width:77px;height:19px;border-radius:0px 4px 4px 0px;"></div>
<span class="t" style="left:1873px;transform:translateX(-50%);top:928.0px;font-size:11.5px;color:#fff;">16</span>
<div class="w num" style="left:1674px;top:948px;width:238px;height:19px;border-radius:10px;background:linear-gradient(90deg,#7c7c7c 0,#7c7c7c 18%,transparent 18%),linear-gradient(#a0a0a0,#b6b6b6);"></div>
<span class="t" style="left:1688px;top:950.0px;font-size:11.5px;color:#000;letter-spacing:-0.359px;">Compression:</span>
<span class="t" style="right:24px;top:950.0px;font-size:11.5px;color:#000;letter-spacing:0.484px;">15%</span>
<div style="left:1671px;top:976px;width:244px;height:1px;background:#5e5e5e"></div>
<div style="left:1671px;top:977px;width:244px;height:1px;background:#7a7a7a"></div>
<svg style="left:1679px;top:984.5px;" width="8" height="9" viewBox="0 0 8 9"><path d="M0.5,0.3V8.7L7.8,4.5Z" fill="#1a1a1a"/></svg>
<span class="t" style="left:1691px;top:980.5px;font-size:12.5px;color:#111;letter-spacing:-0.500px;">Bake</span>
<svg style="left:1898px;top:986.5px;" width="12" height="6" viewBox="0 0 12 6"><rect x="0" y="0" width="1" height="1" fill="#cfcfcf"/><rect x="0" y="1" width="1" height="1" fill="#4a4a4a" opacity="0.5"/><rect x="0" y="3" width="1" height="1" fill="#cfcfcf"/><rect x="0" y="4" width="1" height="1" fill="#4a4a4a" opacity="0.5"/><rect x="3" y="0" width="1" height="1" fill="#cfcfcf"/><rect x="3" y="1" width="1" height="1" fill="#4a4a4a" opacity="0.5"/><rect x="3" y="3" width="1" height="1" fill="#cfcfcf"/><rect x="3" y="4" width="1" height="1" fill="#4a4a4a" opacity="0.5"/><rect x="6" y="0" width="1" height="1" fill="#cfcfcf"/><rect x="6" y="1" width="1" height="1" fill="#4a4a4a" opacity="0.5"/><rect x="6" y="3" width="1" height="1" fill="#cfcfcf"/><rect x="6" y="4" width="1" height="1" fill="#4a4a4a" opacity="0.5"/><rect x="9" y="0" width="1" height="1" fill="#cfcfcf"/><rect x="9" y="1" width="1" height="1" fill="#4a4a4a" opacity="0.5"/><rect x="9" y="3" width="1" height="1" fill="#cfcfcf"/><rect x="9" y="4" width="1" height="1" fill="#4a4a4a" opacity="0.5"/></svg>
<div style="left:1671px;top:1000px;width:244px;height:1px;background:#5e5e5e"></div>
<div style="left:1671px;top:1001px;width:244px;height:1px;background:#7a7a7a"></div>
<svg style="left:1679px;top:1008.5px;" width="8" height="9" viewBox="0 0 8 9"><path d="M0.5,0.3V8.7L7.8,4.5Z" fill="#1a1a1a"/></svg>
<div class="w opt" style="left:1691px;top:1006px;width:14px;height:14px;border-radius:3px;"></div>
<span class="t" style="left:1711px;top:1004.5px;font-size:12.5px;color:#111;letter-spacing:-0.052px;">Freestyle</span>
<svg style="left:1898px;top:1010.5px;" width="12" height="6" viewBox="0 0 12 6"><rect x="0" y="0" width="1" height="1" fill="#cfcfcf"/><rect x="0" y="1" width="1" height="1" fill="#4a4a4a" opacity="0.5"/><rect x="0" y="3" width="1" height="1" fill="#cfcfcf"/><rect x="0" y="4" width="1" height="1" fill="#4a4a4a" opacity="0.5"/><rect x="3" y="0" width="1" height="1" fill="#cfcfcf"/><rect x="3" y="1" width="1" height="1" fill="#4a4a4a" opacity="0.5"/><rect x="3" y="3" width="1" height="1" fill="#cfcfcf"/><rect x="3" y="4" width="1" height="1" fill="#4a4a4a" opacity="0.5"/><rect x="6" y="0" width="1" height="1" fill="#cfcfcf"/><rect x="6" y="1" width="1" height="1" fill="#4a4a4a" opacity="0.5"/><rect x="6" y="3" width="1" height="1" fill="#cfcfcf"/><rect x="6" y="4" width="1" height="1" fill="#4a4a4a" opacity="0.5"/><rect x="9" y="0" width="1" height="1" fill="#cfcfcf"/><rect x="9" y="1" width="1" height="1" fill="#4a4a4a" opacity="0.5"/><rect x="9" y="3" width="1" height="1" fill="#cfcfcf"/><rect x="9" y="4" width="1" height="1" fill="#4a4a4a" opacity="0.5"/></svg>
<svg style="left:1666px;top:1028px;" width="12" height="12" viewBox="0 0 12 12"><path d="M0,8L4,12" stroke="#3a3a3a" stroke-width="1"/><path d="M0,7L5,12" stroke="#9a9a9a" stroke-width="1"/><path d="M0,5L7,12" stroke="#3a3a3a" stroke-width="1"/><path d="M0,4L8,12" stroke="#9a9a9a" stroke-width="1"/><path d="M0,2L10,12" stroke="#3a3a3a" stroke-width="1"/><path d="M0,1L11,12" stroke="#9a9a9a" stroke-width="1"/></svg>
<svg style="left:1653px;top:50px;" width="12" height="12" viewBox="0 0 12 12"><path d="M8,0L12,4" stroke="#3a3a3a" stroke-width="1"/><path d="M7,0L12,5" stroke="#9a9a9a" stroke-width="1"/><path d="M5,0L12,7" stroke="#3a3a3a" stroke-width="1"/><path d="M4,0L12,8" stroke="#9a9a9a" stroke-width="1"/><path d="M2,0L12,10" stroke="#3a3a3a" stroke-width="1"/><path d="M1,0L12,11" stroke="#9a9a9a" stroke-width="1"/></svg>
<div style="left:1651px;top:72px;width:14px;height:13px;background:#2c2c2c;border-radius:2px 0 0 2px;"></div>
<svg style="left:1653px;top:74px;" width="9" height="9" viewBox="0 0 9 9"><path d="M4.5,1V8M1,4.5H8" stroke="#707070" stroke-width="2"/></svg>
<span class="t" style="left:179px;top:59.5px;font-size:11.5px;color:#fff;letter-spacing:-0.250px;">User Ortho</span>
<span class="t" style="left:229px;top:897.7px;font-size:11.5px;color:#fff;letter-spacing:-0.039px;">(1) Cylinder</span>
<span class="t" style="left:188px;top:856.0px;font-size:9.5px;color:#2a2ac0;">z</span>
<span class="t" style="left:194px;top:874.0px;font-size:9.5px;color:#2a962a;">y</span>
<span class="t" style="left:211px;top:881.0px;font-size:9.5px;color:#a02828;">x</span></body></html>
